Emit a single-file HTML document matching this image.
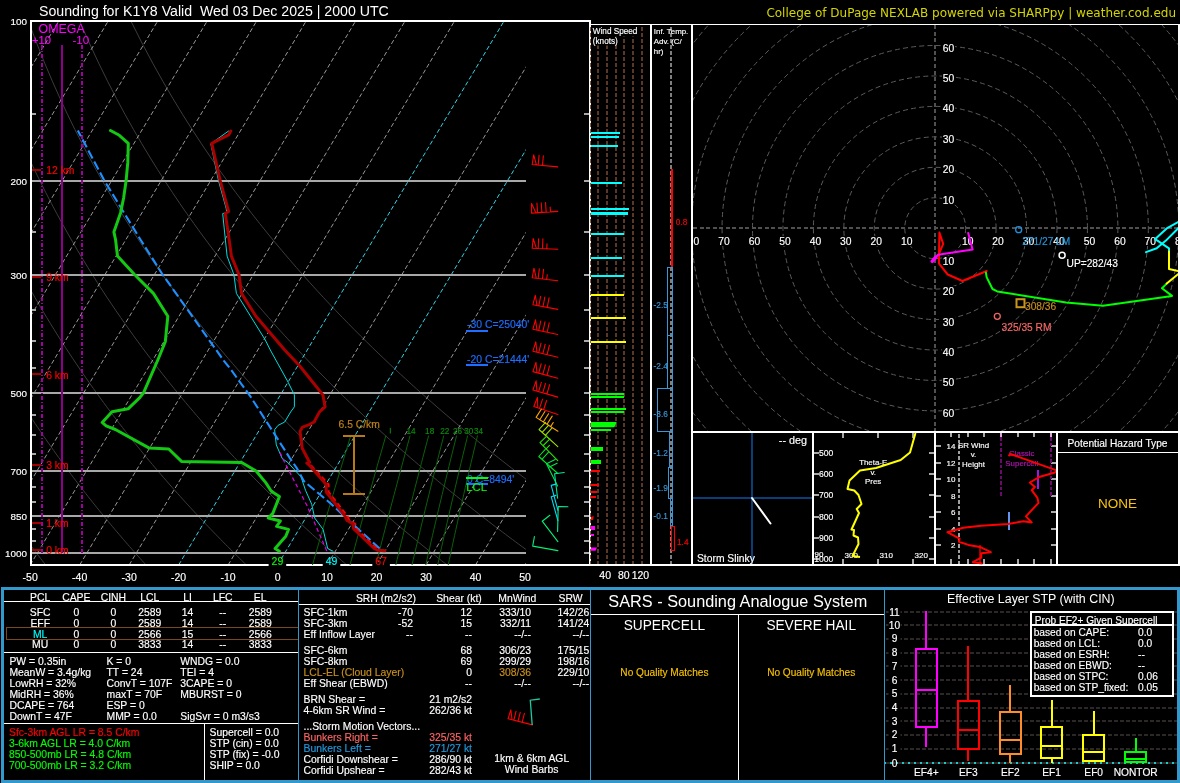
<!DOCTYPE html>
<html><head><meta charset="utf-8"><title>Sounding K1Y8</title>
<style>
html,body{margin:0;padding:0;background:#000;overflow:hidden}
svg{display:block;font-family:"Liberation Sans",sans-serif;will-change:transform}
</style></head><body>
<svg width="1180" height="783" viewBox="0 0 1180 783">
<rect x="0" y="0" width="1180" height="783" fill="#000"/>
<clipPath id="skc"><rect x="31" y="21" width="495" height="544"/></clipPath>
<g clip-path="url(#skc)">
<polyline points="45.7,565 43.97,562.79 42.23,560.55 40.48,558.29 38.72,556.01 36.95,553.71 35.18,551.39 33.39,549.04 31.6,546.67 29.8,544.27 27.99,541.85 26.17,539.4 24.34,536.92 22.5,534.42 20.65,531.89 18.79,529.34 16.92,526.75 15.04,524.14 13.16,521.49 11.26,518.82 9.35,516.11 7.43,513.37 5.5,510.6 3.56,507.8 1.6,504.96 -0.36,502.09 -2.34,499.18 -4.32,496.23 -6.32,493.24 -8.33,490.22 -10.36,487.16 -12.39,484.05 -14.44,480.9 -16.5,477.71 -18.57,474.48 -20.66,471.19 -22.76,467.87 -24.87,464.49 -27,461.06 -29.14,457.58 -31.29,454.05 -33.46,450.46 -35.65,446.82 -37.85,443.12 -40.06,439.35 -42.29,435.53 -44.54,431.64 -46.8,427.69 -49.07,423.66 -51.37,419.57 -53.68,415.4 -56,411.16 -58.35,406.83 -60.71,402.42 -63.09,397.93 -65.49,393.35 -67.91,388.68 -70.34,383.91 -72.8,379.03 -75.27,374.06 -77.77,368.97 -80.28,363.78 -82.82,358.46 -85.38,353.01 -87.95,347.44 -90.55,341.72 -93.17,335.87 -95.82,329.86 -98.48,323.69 -101.17,317.35 -103.88,310.83 -106.62,304.13 -109.38,297.22 -112.16,290.1 -114.96,282.75 -117.79,275.17 -120.65,267.33 -123.52,259.21 -126.42,250.79 -129.35,242.06 -132.29,232.99 -135.26,223.54 -138.24,213.7 -141.25,203.41 -144.27,192.65 -147.3,181.36 -150.35,169.5 -153.39,156.99 -156.44,143.76 -159.48,129.74 -162.5,114.81 -165.48,98.84 -168.42,81.7 -171.27,63.18 -174.03,43.05 -176.62,21" fill="none" stroke="#3c3c3c" stroke-width="1" />
<polyline points="146.05,565 144.04,562.79 142.03,560.55 140,558.29 137.96,556.01 135.91,553.71 133.85,551.39 131.78,549.04 129.7,546.67 127.61,544.27 125.51,541.85 123.39,539.4 121.27,536.92 119.13,534.42 116.98,531.89 114.82,529.34 112.64,526.75 110.46,524.14 108.26,521.49 106.04,518.82 103.82,516.11 101.58,513.37 99.33,510.6 97.06,507.8 94.78,504.96 92.49,502.09 90.18,499.18 87.85,496.23 85.52,493.24 83.16,490.22 80.79,487.16 78.41,484.05 76.01,480.9 73.59,477.71 71.16,474.48 68.71,471.19 66.25,467.87 63.76,464.49 61.26,461.06 58.74,457.58 56.2,454.05 53.65,450.46 51.07,446.82 48.48,443.12 45.87,439.35 43.23,435.53 40.58,431.64 37.9,427.69 35.2,423.66 32.49,419.57 29.74,415.4 26.98,411.16 24.19,406.83 21.38,402.42 18.55,397.93 15.69,393.35 12.81,388.68 9.9,383.91 6.96,379.03 4,374.06 1,368.97 -2.01,363.78 -5.06,358.46 -8.14,353.01 -11.25,347.44 -14.39,341.72 -17.56,335.87 -20.76,329.86 -23.99,323.69 -27.26,317.35 -30.57,310.83 -33.91,304.13 -37.28,297.22 -40.7,290.1 -44.15,282.75 -47.64,275.17 -51.17,267.33 -54.74,259.21 -58.35,250.79 -62,242.06 -65.7,232.99 -69.44,223.54 -73.22,213.7 -77.04,203.41 -80.91,192.65 -84.82,181.36 -88.77,169.5 -92.76,156.99 -96.79,143.76 -100.86,129.74 -104.95,114.81 -109.05,98.84 -113.17,81.7 -117.28,63.18 -121.35,43.05 -125.37,21" fill="none" stroke="#3c3c3c" stroke-width="1" />
<polyline points="246.4,565 244.12,562.79 241.82,560.55 239.52,558.29 237.2,556.01 234.87,553.71 232.53,551.39 230.17,549.04 227.81,546.67 225.42,544.27 223.03,541.85 220.62,539.4 218.2,536.92 215.76,534.42 213.31,531.89 210.84,529.34 208.36,526.75 205.87,524.14 203.36,521.49 200.83,518.82 198.29,516.11 195.73,513.37 193.16,510.6 190.57,507.8 187.96,504.96 185.33,502.09 182.69,499.18 180.03,496.23 177.36,493.24 174.66,490.22 171.95,487.16 169.21,484.05 166.46,480.9 163.69,477.71 160.9,474.48 158.08,471.19 155.25,467.87 152.4,464.49 149.52,461.06 146.62,457.58 143.7,454.05 140.76,450.46 137.8,446.82 134.81,443.12 131.79,439.35 128.75,435.53 125.69,431.64 122.6,427.69 119.48,423.66 116.34,419.57 113.17,415.4 109.97,411.16 106.74,406.83 103.48,402.42 100.19,397.93 96.87,393.35 93.52,388.68 90.13,383.91 86.72,379.03 83.26,374.06 79.78,368.97 76.25,363.78 72.69,358.46 69.1,353.01 65.46,347.44 61.78,341.72 58.06,335.87 54.3,329.86 50.49,323.69 46.64,317.35 42.75,310.83 38.8,304.13 34.81,297.22 30.77,290.1 26.67,282.75 22.52,275.17 18.31,267.33 14.05,259.21 9.73,250.79 5.34,242.06 0.9,232.99 -3.61,223.54 -8.19,213.7 -12.84,203.41 -17.55,192.65 -22.34,181.36 -27.2,169.5 -32.14,156.99 -37.15,143.76 -42.23,129.74 -47.39,114.81 -52.63,98.84 -57.92,81.7 -63.28,63.18 -68.68,43.05 -74.11,21" fill="none" stroke="#3c3c3c" stroke-width="1" />
<polyline points="346.75,565 344.19,562.79 341.62,560.55 339.04,558.29 336.44,556.01 333.83,553.71 331.21,551.39 328.57,549.04 325.91,546.67 323.24,544.27 320.55,541.85 317.85,539.4 315.13,536.92 312.39,534.42 309.64,531.89 306.87,529.34 304.08,526.75 301.28,524.14 298.46,521.49 295.62,518.82 292.76,516.11 289.88,513.37 286.99,510.6 284.07,507.8 281.14,504.96 278.18,502.09 275.21,499.18 272.21,496.23 269.19,493.24 266.16,490.22 263.1,487.16 260.01,484.05 256.91,480.9 253.78,477.71 250.63,474.48 247.46,471.19 244.26,467.87 241.03,464.49 237.78,461.06 234.51,457.58 231.2,454.05 227.87,450.46 224.52,446.82 221.13,443.12 217.72,439.35 214.27,435.53 210.8,431.64 207.29,427.69 203.76,423.66 200.19,419.57 196.59,415.4 192.95,411.16 189.28,406.83 185.57,402.42 181.83,397.93 178.05,393.35 174.23,388.68 170.37,383.91 166.47,379.03 162.53,374.06 158.55,368.97 154.52,363.78 150.45,358.46 146.33,353.01 142.16,347.44 137.95,341.72 133.68,335.87 129.36,329.86 124.98,323.69 120.55,317.35 116.06,310.83 111.51,304.13 106.9,297.22 102.23,290.1 97.49,282.75 92.67,275.17 87.79,267.33 82.84,259.21 77.8,250.79 72.69,242.06 67.49,232.99 62.21,223.54 56.84,213.7 51.37,203.41 45.81,192.65 40.14,181.36 34.37,169.5 28.49,156.99 22.5,143.76 16.39,129.74 10.16,114.81 3.8,98.84 -2.68,81.7 -9.28,63.18 -16.01,43.05 -22.85,21" fill="none" stroke="#3c3c3c" stroke-width="1" />
<polyline points="447.1,565 444.27,562.79 441.42,560.55 438.56,558.29 435.69,556.01 432.79,553.71 429.88,551.39 426.96,549.04 424.01,546.67 421.05,544.27 418.07,541.85 415.07,539.4 412.06,536.92 409.02,534.42 405.97,531.89 402.89,529.34 399.8,526.75 396.69,524.14 393.56,521.49 390.4,518.82 387.23,516.11 384.03,513.37 380.81,510.6 377.58,507.8 374.31,504.96 371.03,502.09 367.72,499.18 364.39,496.23 361.03,493.24 357.65,490.22 354.25,487.16 350.82,484.05 347.36,480.9 343.88,477.71 340.37,474.48 336.83,471.19 333.26,467.87 329.67,464.49 326.04,461.06 322.39,457.58 318.7,454.05 314.99,450.46 311.24,446.82 307.46,443.12 303.64,439.35 299.79,435.53 295.91,431.64 291.99,427.69 288.04,423.66 284.04,419.57 280.01,415.4 275.94,411.16 271.82,406.83 267.67,402.42 263.47,397.93 259.23,393.35 254.95,388.68 250.61,383.91 246.23,379.03 241.8,374.06 237.32,368.97 232.79,363.78 228.21,358.46 223.57,353.01 218.87,347.44 214.11,341.72 209.3,335.87 204.42,329.86 199.47,323.69 194.46,317.35 189.38,310.83 184.22,304.13 179,297.22 173.69,290.1 168.3,282.75 162.83,275.17 157.27,267.33 151.62,259.21 145.88,250.79 140.04,242.06 134.09,232.99 128.03,223.54 121.87,213.7 115.58,203.41 109.17,192.65 102.62,181.36 95.95,169.5 89.12,156.99 82.15,143.76 75.01,129.74 67.71,114.81 60.23,98.84 52.57,81.7 44.71,63.18 36.66,43.05 28.4,21" fill="none" stroke="#3c3c3c" stroke-width="1" />
<polyline points="547.45,565 544.34,562.79 541.22,560.55 538.08,558.29 534.93,556.01 531.75,553.71 528.56,551.39 525.35,549.04 522.11,546.67 518.86,544.27 515.59,541.85 512.3,539.4 508.98,536.92 505.65,534.42 502.3,531.89 498.92,529.34 495.52,526.75 492.1,524.14 488.66,521.49 485.19,518.82 481.7,516.11 478.18,513.37 474.64,510.6 471.08,507.8 467.49,504.96 463.88,502.09 460.24,499.18 456.57,496.23 452.87,493.24 449.15,490.22 445.4,487.16 441.62,484.05 437.81,480.9 433.97,477.71 430.1,474.48 426.2,471.19 422.27,467.87 418.3,464.49 414.3,461.06 410.27,457.58 406.2,454.05 402.1,450.46 397.96,446.82 393.78,443.12 389.57,439.35 385.32,435.53 381.02,431.64 376.69,427.69 372.31,423.66 367.89,419.57 363.43,415.4 358.92,411.16 354.37,406.83 349.76,402.42 345.11,397.93 340.41,393.35 335.66,388.68 330.85,383.91 325.99,379.03 321.07,374.06 316.1,368.97 311.06,363.78 305.96,358.46 300.8,353.01 295.57,347.44 290.28,341.72 284.91,335.87 279.47,329.86 273.96,323.69 268.37,317.35 262.69,310.83 256.93,304.13 251.09,297.22 245.15,290.1 239.12,282.75 232.99,275.17 226.75,267.33 220.41,259.21 213.95,250.79 207.38,242.06 200.68,232.99 193.86,223.54 186.89,213.7 179.78,203.41 172.53,192.65 165.11,181.36 157.52,169.5 149.75,156.99 141.79,143.76 133.63,129.74 125.26,114.81 116.66,98.84 107.81,81.7 98.71,63.18 89.33,43.05 79.66,21" fill="none" stroke="#3c3c3c" stroke-width="1" />
<polyline points="647.79,565 644.42,562.79 641.02,560.55 637.61,558.29 634.17,556.01 630.71,553.71 627.24,551.39 623.74,549.04 620.22,546.67 616.67,544.27 613.11,541.85 609.52,539.4 605.91,536.92 602.28,534.42 598.62,531.89 594.94,529.34 591.24,526.75 587.51,524.14 583.75,521.49 579.97,518.82 576.17,516.11 572.33,513.37 568.47,510.6 564.59,507.8 560.67,504.96 556.72,502.09 552.75,499.18 548.75,496.23 544.71,493.24 540.65,490.22 536.55,487.16 532.42,484.05 528.26,480.9 524.07,477.71 519.84,474.48 515.57,471.19 511.27,467.87 506.94,464.49 502.56,461.06 498.15,457.58 493.7,454.05 489.21,450.46 484.68,446.82 480.11,443.12 475.5,439.35 470.84,435.53 466.13,431.64 461.39,427.69 456.59,423.66 451.75,419.57 446.85,415.4 441.91,411.16 436.91,406.83 431.86,402.42 426.75,397.93 421.59,393.35 416.37,388.68 411.09,383.91 405.75,379.03 400.34,374.06 394.87,368.97 389.33,363.78 383.72,358.46 378.04,353.01 372.28,347.44 366.45,341.72 360.53,335.87 354.53,329.86 348.45,323.69 342.27,317.35 336.01,310.83 329.64,304.13 323.18,297.22 316.61,290.1 309.93,282.75 303.14,275.17 296.23,267.33 289.2,259.21 282.03,250.79 274.73,242.06 267.28,232.99 259.68,223.54 251.92,213.7 243.99,203.41 235.88,192.65 227.59,181.36 219.09,169.5 210.38,156.99 201.44,143.76 192.26,129.74 182.81,114.81 173.09,98.84 163.06,81.7 152.71,63.18 142,43.05 130.92,21" fill="none" stroke="#3c3c3c" stroke-width="1" />
<line x1="-514.08" y1="565" x2="-188.64" y2="21" stroke="#989898" stroke-width="1" stroke-dasharray="4.4 2.5" />
<line x1="-464.6" y1="565" x2="-139.16" y2="21" stroke="#989898" stroke-width="1" stroke-dasharray="4.4 2.5" />
<line x1="-415.12" y1="565" x2="-89.68" y2="21" stroke="#989898" stroke-width="1" stroke-dasharray="4.4 2.5" />
<line x1="-365.64" y1="565" x2="-40.2" y2="21" stroke="#989898" stroke-width="1" stroke-dasharray="4.4 2.5" />
<line x1="-316.16" y1="565" x2="9.28" y2="21" stroke="#989898" stroke-width="1" stroke-dasharray="4.4 2.5" />
<line x1="-266.68" y1="565" x2="58.76" y2="21" stroke="#989898" stroke-width="1" stroke-dasharray="4.4 2.5" />
<line x1="-217.2" y1="565" x2="108.24" y2="21" stroke="#989898" stroke-width="1" stroke-dasharray="4.4 2.5" />
<line x1="-167.72" y1="565" x2="157.72" y2="21" stroke="#989898" stroke-width="1" stroke-dasharray="4.4 2.5" />
<line x1="-118.24" y1="565" x2="207.2" y2="21" stroke="#989898" stroke-width="1" stroke-dasharray="4.4 2.5" />
<line x1="-68.76" y1="565" x2="256.68" y2="21" stroke="#989898" stroke-width="1" stroke-dasharray="4.4 2.5" />
<line x1="-19.28" y1="565" x2="306.16" y2="21" stroke="#989898" stroke-width="1" stroke-dasharray="4.4 2.5" />
<line x1="30.2" y1="565" x2="355.64" y2="21" stroke="#989898" stroke-width="1" stroke-dasharray="4.4 2.5" />
<line x1="79.68" y1="565" x2="405.12" y2="21" stroke="#989898" stroke-width="1" stroke-dasharray="4.4 2.5" />
<line x1="129.16" y1="565" x2="454.6" y2="21" stroke="#989898" stroke-width="1" stroke-dasharray="4.4 2.5" />
<line x1="178.64" y1="565" x2="504.08" y2="21" stroke="#35d2e2" stroke-width="1" stroke-dasharray="4.4 2.5" />
<line x1="228.12" y1="565" x2="553.56" y2="21" stroke="#989898" stroke-width="1" stroke-dasharray="4.4 2.5" />
<line x1="277.6" y1="565" x2="603.04" y2="21" stroke="#35d2e2" stroke-width="1" stroke-dasharray="4.4 2.5" />
<line x1="327.08" y1="565" x2="652.52" y2="21" stroke="#989898" stroke-width="1" stroke-dasharray="4.4 2.5" />
<line x1="376.56" y1="565" x2="702" y2="21" stroke="#989898" stroke-width="1" stroke-dasharray="4.4 2.5" />
<line x1="426.04" y1="565" x2="751.48" y2="21" stroke="#989898" stroke-width="1" stroke-dasharray="4.4 2.5" />
<line x1="475.52" y1="565" x2="800.96" y2="21" stroke="#989898" stroke-width="1" stroke-dasharray="4.4 2.5" />
<line x1="525" y1="565" x2="850.44" y2="21" stroke="#989898" stroke-width="1" stroke-dasharray="4.4 2.5" />
<line x1="31" y1="181" x2="526" y2="181" stroke="#a8a8a8" stroke-width="2" shape-rendering="crispEdges"/>
<line x1="31" y1="275" x2="526" y2="275" stroke="#a8a8a8" stroke-width="2" shape-rendering="crispEdges"/>
<line x1="31" y1="393" x2="526" y2="393" stroke="#a8a8a8" stroke-width="2" shape-rendering="crispEdges"/>
<line x1="31" y1="471" x2="526" y2="471" stroke="#a8a8a8" stroke-width="2" shape-rendering="crispEdges"/>
<line x1="31" y1="516" x2="526" y2="516" stroke="#a8a8a8" stroke-width="2" shape-rendering="crispEdges"/>
<line x1="31" y1="553" x2="526" y2="553" stroke="#a8a8a8" stroke-width="2" shape-rendering="crispEdges"/>
</g>
<line x1="31" y1="114" x2="36" y2="114" stroke="#a8a8a8" stroke-width="2" shape-rendering="crispEdges"/>
<line x1="31" y1="232" x2="36" y2="232" stroke="#a8a8a8" stroke-width="2" shape-rendering="crispEdges"/>
<line x1="31" y1="310" x2="36" y2="310" stroke="#a8a8a8" stroke-width="2" shape-rendering="crispEdges"/>
<line x1="31" y1="341" x2="36" y2="341" stroke="#a8a8a8" stroke-width="2" shape-rendering="crispEdges"/>
<line x1="31" y1="368" x2="36" y2="368" stroke="#a8a8a8" stroke-width="2" shape-rendering="crispEdges"/>
<line x1="31" y1="415" x2="36" y2="415" stroke="#a8a8a8" stroke-width="2" shape-rendering="crispEdges"/>
<line x1="31" y1="435" x2="36" y2="435" stroke="#a8a8a8" stroke-width="2" shape-rendering="crispEdges"/>
<line x1="31" y1="454" x2="36" y2="454" stroke="#a8a8a8" stroke-width="2" shape-rendering="crispEdges"/>
<line x1="31" y1="487" x2="36" y2="487" stroke="#a8a8a8" stroke-width="2" shape-rendering="crispEdges"/>
<line x1="31" y1="502" x2="36" y2="502" stroke="#a8a8a8" stroke-width="2" shape-rendering="crispEdges"/>
<line x1="31" y1="529" x2="36" y2="529" stroke="#a8a8a8" stroke-width="2" shape-rendering="crispEdges"/>
<line x1="31" y1="541" x2="36" y2="541" stroke="#a8a8a8" stroke-width="2" shape-rendering="crispEdges"/>
<line x1="584" y1="114" x2="590" y2="114" stroke="#a8a8a8" stroke-width="2" shape-rendering="crispEdges"/>
<line x1="584" y1="181" x2="590" y2="181" stroke="#a8a8a8" stroke-width="2" shape-rendering="crispEdges"/>
<line x1="584" y1="232" x2="590" y2="232" stroke="#a8a8a8" stroke-width="2" shape-rendering="crispEdges"/>
<line x1="584" y1="275" x2="590" y2="275" stroke="#a8a8a8" stroke-width="2" shape-rendering="crispEdges"/>
<line x1="584" y1="310" x2="590" y2="310" stroke="#a8a8a8" stroke-width="2" shape-rendering="crispEdges"/>
<line x1="584" y1="341" x2="590" y2="341" stroke="#a8a8a8" stroke-width="2" shape-rendering="crispEdges"/>
<line x1="584" y1="368" x2="590" y2="368" stroke="#a8a8a8" stroke-width="2" shape-rendering="crispEdges"/>
<line x1="584" y1="393" x2="590" y2="393" stroke="#a8a8a8" stroke-width="2" shape-rendering="crispEdges"/>
<line x1="584" y1="415" x2="590" y2="415" stroke="#a8a8a8" stroke-width="2" shape-rendering="crispEdges"/>
<line x1="584" y1="435" x2="590" y2="435" stroke="#a8a8a8" stroke-width="2" shape-rendering="crispEdges"/>
<line x1="584" y1="454" x2="590" y2="454" stroke="#a8a8a8" stroke-width="2" shape-rendering="crispEdges"/>
<line x1="584" y1="471" x2="590" y2="471" stroke="#a8a8a8" stroke-width="2" shape-rendering="crispEdges"/>
<line x1="584" y1="487" x2="590" y2="487" stroke="#a8a8a8" stroke-width="2" shape-rendering="crispEdges"/>
<line x1="584" y1="502" x2="590" y2="502" stroke="#a8a8a8" stroke-width="2" shape-rendering="crispEdges"/>
<line x1="584" y1="516" x2="590" y2="516" stroke="#a8a8a8" stroke-width="2" shape-rendering="crispEdges"/>
<line x1="584" y1="529" x2="590" y2="529" stroke="#a8a8a8" stroke-width="2" shape-rendering="crispEdges"/>
<line x1="584" y1="541" x2="590" y2="541" stroke="#a8a8a8" stroke-width="2" shape-rendering="crispEdges"/>
<line x1="584" y1="553" x2="590" y2="553" stroke="#a8a8a8" stroke-width="2" shape-rendering="crispEdges"/>
<rect x="31" y="21" width="559" height="544" fill="none" stroke="#fff" stroke-width="2" shape-rendering="crispEdges"/>
<text x="27" y="24.7" font-size="9.9" fill="#fff" stroke="#fff" stroke-width="0.15" text-anchor="end" >100</text>
<text x="27" y="185.06" font-size="9.9" fill="#fff" stroke="#fff" stroke-width="0.15" text-anchor="end" >200</text>
<text x="27" y="278.87" font-size="9.9" fill="#fff" stroke="#fff" stroke-width="0.15" text-anchor="end" >300</text>
<text x="27" y="397.05" font-size="9.9" fill="#fff" stroke="#fff" stroke-width="0.15" text-anchor="end" >500</text>
<text x="27" y="474.89" font-size="9.9" fill="#fff" stroke="#fff" stroke-width="0.15" text-anchor="end" >700</text>
<text x="27" y="519.81" font-size="9.9" fill="#fff" stroke="#fff" stroke-width="0.15" text-anchor="end" >850</text>
<text x="27" y="557.41" font-size="9.9" fill="#fff" stroke="#fff" stroke-width="0.15" text-anchor="end" >1000</text>
<text x="30.2" y="581" font-size="10.5" fill="#fff" stroke="#fff" stroke-width="0.15" text-anchor="middle" >-50</text>
<text x="79.68" y="581" font-size="10.5" fill="#fff" stroke="#fff" stroke-width="0.15" text-anchor="middle" >-40</text>
<text x="129.16" y="581" font-size="10.5" fill="#fff" stroke="#fff" stroke-width="0.15" text-anchor="middle" >-30</text>
<text x="178.64" y="581" font-size="10.5" fill="#fff" stroke="#fff" stroke-width="0.15" text-anchor="middle" >-20</text>
<text x="228.12" y="581" font-size="10.5" fill="#fff" stroke="#fff" stroke-width="0.15" text-anchor="middle" >-10</text>
<text x="277.6" y="581" font-size="10.5" fill="#fff" stroke="#fff" stroke-width="0.15" text-anchor="middle" >0</text>
<text x="327.08" y="581" font-size="10.5" fill="#fff" stroke="#fff" stroke-width="0.15" text-anchor="middle" >10</text>
<text x="376.56" y="581" font-size="10.5" fill="#fff" stroke="#fff" stroke-width="0.15" text-anchor="middle" >20</text>
<text x="426.04" y="581" font-size="10.5" fill="#fff" stroke="#fff" stroke-width="0.15" text-anchor="middle" >30</text>
<text x="475.52" y="581" font-size="10.5" fill="#fff" stroke="#fff" stroke-width="0.15" text-anchor="middle" >40</text>
<text x="525" y="581" font-size="10.5" fill="#fff" stroke="#fff" stroke-width="0.15" text-anchor="middle" >50</text>
<text x="39" y="15.6" font-size="14.15" fill="#fff" xml:space="preserve">Sounding for K1Y8 Valid  Wed 03 Dec 2025 | 2000 UTC</text>
<text x="1176" y="17" font-size="12" fill="#d4d400" text-anchor="end" font-family="'DejaVu Sans',sans-serif" >College of DuPage NEXLAB powered via SHARPpy | weather.cod.edu</text>
<g clip-path="url(#skc)">
<polyline points="350.78,435.53 347.9,444.97 345.14,454.05 342.5,462.78 339.97,471.19 337.53,479.31 335.19,487.16 332.93,494.74 330.76,502.09 328.66,509.21 326.62,516.11 324.66,522.82 322.75,529.34 320.91,535.68 319.12,541.85 317.38,547.85 315.69,553.71 314.05,559.42 312.45,565" fill="none" stroke="#0a600a" stroke-width="1" />
<polyline points="385.93,435.53 383.22,444.97 380.63,454.05 378.14,462.78 375.76,471.19 373.48,479.31 371.28,487.16 369.16,494.74 367.12,502.09 365.15,509.21 363.25,516.11 361.41,522.82 359.63,529.34 357.91,535.68 356.23,541.85 354.61,547.85 353.04,553.71 351.51,559.42 350.02,565" fill="none" stroke="#0a600a" stroke-width="1" />
<polyline points="410.1,435.53 407.51,444.97 405.03,454.05 402.65,462.78 400.38,471.19 398.2,479.31 396.1,487.16 394.08,494.74 392.14,502.09 390.26,509.21 388.45,516.11 386.7,522.82 385.01,529.34 383.37,535.68 381.78,541.85 380.24,547.85 378.75,553.71 377.29,559.42 375.88,565" fill="none" stroke="#0a600a" stroke-width="1" />
<text x="411.1" y="433.8" font-size="8.2" fill="#0a8c0a" stroke="#0a8c0a" stroke-width="0.15" text-anchor="middle" >14</text>
<polyline points="428.67,435.53 426.17,444.97 423.78,454.05 421.49,462.78 419.3,471.19 417.2,479.31 415.18,487.16 413.24,494.74 411.37,502.09 409.57,509.21 407.83,516.11 406.15,522.82 404.53,529.34 402.95,535.68 401.43,541.85 399.95,547.85 398.52,553.71 397.13,559.42 395.78,565" fill="none" stroke="#0a600a" stroke-width="1" />
<text x="429.67" y="433.8" font-size="8.2" fill="#0a8c0a" stroke="#0a8c0a" stroke-width="0.15" text-anchor="middle" >18</text>
<polyline points="443.8,435.53 441.38,444.97 439.06,454.05 436.85,462.78 434.73,471.19 432.69,479.31 430.74,487.16 428.86,494.74 427.06,502.09 425.32,509.21 423.64,516.11 422.01,522.82 420.45,529.34 418.93,535.68 417.46,541.85 416.03,547.85 414.65,553.71 413.31,559.42 412.01,565" fill="none" stroke="#0a600a" stroke-width="1" />
<text x="444.8" y="433.8" font-size="8.2" fill="#0a8c0a" stroke="#0a8c0a" stroke-width="0.15" text-anchor="middle" >22</text>
<polyline points="456.6,435.53 454.24,444.97 451.99,454.05 449.83,462.78 447.77,471.19 445.8,479.31 443.9,487.16 442.08,494.74 440.33,502.09 438.64,509.21 437.01,516.11 435.43,522.82 433.91,529.34 432.44,535.68 431.02,541.85 429.64,547.85 428.3,553.71 427.01,559.42 425.75,565" fill="none" stroke="#0a600a" stroke-width="1" />
<text x="457.6" y="433.8" font-size="8.2" fill="#0a8c0a" stroke="#0a8c0a" stroke-width="0.15" text-anchor="middle" >26</text>
<polyline points="467.7,435.53 465.4,444.97 463.2,454.05 461.1,462.78 459.09,471.19 457.17,479.31 455.32,487.16 453.55,494.74 451.84,502.09 450.19,509.21 448.61,516.11 447.08,522.82 445.6,529.34 444.17,535.68 442.79,541.85 441.45,547.85 440.15,553.71 438.89,559.42 437.67,565" fill="none" stroke="#0a600a" stroke-width="1" />
<text x="468.7" y="433.8" font-size="8.2" fill="#0a8c0a" stroke="#0a8c0a" stroke-width="0.15" text-anchor="middle" >30</text>
<polyline points="477.51,435.53 475.25,444.97 473.11,454.05 471.05,462.78 469.09,471.19 467.21,479.31 465.41,487.16 463.68,494.74 462.01,502.09 460.41,509.21 458.86,516.11 457.37,522.82 455.93,529.34 454.54,535.68 453.19,541.85 451.88,547.85 450.62,553.71 449.39,559.42 448.21,565" fill="none" stroke="#0a600a" stroke-width="1" />
<text x="478.51" y="433.8" font-size="8.2" fill="#0a8c0a" stroke="#0a8c0a" stroke-width="0.15" text-anchor="middle" >34</text>
<line x1="390.3" y1="427.8" x2="390.3" y2="433.5" stroke="#0a8c0a" stroke-width="1" />
<line x1="62" y1="45" x2="62" y2="553" stroke="#8c008c" stroke-width="2" shape-rendering="crispEdges"/>
<line x1="42" y1="45" x2="42" y2="553" stroke="#a000a0" stroke-width="2" stroke-dasharray="4 2 1 2" shape-rendering="crispEdges"/>
<line x1="82" y1="45" x2="82" y2="553" stroke="#a000a0" stroke-width="2" stroke-dasharray="4 2 1 2" shape-rendering="crispEdges"/>
<text x="38.6" y="32.7" font-size="12.4" fill="#ff00ff" >OMEGA</text>
<text x="32" y="44" font-size="11.2" fill="#ff00ff" stroke="#ff00ff" stroke-width="0.15" >+10</text>
<text x="72.5" y="44" font-size="11.6" fill="#ff00ff" >-10</text>
<line x1="32" y1="170" x2="41" y2="170" stroke="#a00000" stroke-width="2" shape-rendering="crispEdges"/>
<text x="46.2" y="173.8" font-size="10.4" fill="#ff0000" stroke="#ff0000" stroke-width="0.15" >12 km</text>
<line x1="32" y1="277" x2="41" y2="277" stroke="#a00000" stroke-width="2" shape-rendering="crispEdges"/>
<text x="46.2" y="280.7" font-size="10.4" fill="#ff0000" stroke="#ff0000" stroke-width="0.15" >9 km</text>
<line x1="32" y1="374" x2="41" y2="374" stroke="#a00000" stroke-width="2" shape-rendering="crispEdges"/>
<text x="46.2" y="378.6" font-size="10.4" fill="#ff0000" stroke="#ff0000" stroke-width="0.15" >6 km</text>
<line x1="32" y1="465" x2="41" y2="465" stroke="#a00000" stroke-width="2" shape-rendering="crispEdges"/>
<text x="46.2" y="469" font-size="10.4" fill="#ff0000" stroke="#ff0000" stroke-width="0.15" >3 km</text>
<line x1="32" y1="523" x2="41" y2="523" stroke="#a00000" stroke-width="2" shape-rendering="crispEdges"/>
<text x="46.2" y="526.9" font-size="10.4" fill="#ff0000" stroke="#ff0000" stroke-width="0.15" >1 km</text>
<line x1="32" y1="550" x2="41" y2="550" stroke="#a00000" stroke-width="2" shape-rendering="crispEdges"/>
<text x="46.2" y="553.7" font-size="10.4" fill="#ff0000" stroke="#ff0000" stroke-width="0.15" >0 km</text>
<polyline points="228.6,131 210.8,143.7 218.5,180.7 226.1,208.1 226.9,212.4 222.7,213.6 225.4,240 227.1,256.1 233.9,274.7 236.4,293.4 265.3,340 270.3,350 288.1,382.2 294.4,394.9 294.4,406.8 290.7,411.9 284.7,422 278,425.4 274.6,429.7 276.3,444.9 282.2,458.5 288.1,462.7 295.8,471.2 301,476.8 305.6,490.5 311.7,504.2 314.7,518 323.1,529.4 327.7,548.5 333,551.2" fill="none" stroke="#00dcdc" stroke-width="1" stroke-linejoin="round" stroke-linecap="round"/>
<polyline points="280,452.5 284.2,461.5 307.1,505.8 326.9,551.2" fill="none" stroke="#e000e0" stroke-width="1.2" stroke-dasharray="4 3" />
<polyline points="379.6,548.5 346.8,518.7 331.5,504.2 304.1,481.4 296.6,467.8 290,458.3 250,395.8 229.7,368 223.9,360.8 162.7,274.7 140.7,240 104.4,180.7 77.8,130.5" fill="none" stroke="#1e90ff" stroke-width="2.1" stroke-dasharray="9 3.5" />
<polyline points="110.5,130.5 119.3,135.3 128.3,143.4 127.8,162.4 126.1,180.7 123.6,198 120.7,212.4 113.9,231.9 115.6,240 117.5,256.1 134.7,274.7 153.4,293.4 167.8,316.3 165.3,341.7 157.8,360 143.4,393.1 140,397.3 128.1,408.8 112,411.7 102.2,422.4 106.1,425.8 115.4,429.5 149.3,448.1 168.8,449 181.5,461.4 241.7,462.5 256.1,471 265.9,482.9 271.3,491.3 279.4,496.6 272.8,513.4 268.2,518 280.4,521 276.6,526.4 288.5,529.4 285.8,536.3 275.1,548.5 279.4,551.2" fill="none" stroke="#14c814" stroke-width="3" stroke-linejoin="round" stroke-linecap="round"/>
<polyline points="310.8,465.3 328.5,484.4 328.5,492 347.5,516.4 349.1,520.2 355.2,524.1 355.9,528.6 376.5,548.5 380.3,550.3 385.8,550.8" fill="none" stroke="#ff0000" stroke-width="2.2" stroke-dasharray="5 3" />
<polyline points="230.8,131 228.6,134.9 211.7,143.4 220.2,180.7 228.6,211.5 225.3,213.6 229.2,240 231.4,256.1 239,274.7 241.5,293.4 255.9,316.3 284.7,350 300,366.3 322.9,394.9 325.1,406.8 319.5,411.9 314.1,422 309.3,424.6 302.5,427.1 300,431.4 302.2,448.3 308.5,460.2 309.7,462.2 306.8,463.2 309.4,465.3 326.2,484.4 326.2,492 345.2,516.4 346.8,520.2 352.9,524.1 353.6,528.6 374.2,548.5 378,550.3 384.9,550.8" fill="none" stroke="#aa0000" stroke-width="3" stroke-linejoin="round" stroke-linecap="round"/>
</g>
<text x="338.6" y="427.6" font-size="10.3" fill="#c08418" stroke="#c08418" stroke-width="0.15" >6.5 C/km</text>
<line x1="343" y1="436" x2="365" y2="436" stroke="#b87a16" stroke-width="2" shape-rendering="crispEdges"/>
<line x1="343" y1="494" x2="365" y2="494" stroke="#b87a16" stroke-width="2" shape-rendering="crispEdges"/>
<line x1="354" y1="436" x2="354" y2="494" stroke="#b87a16" stroke-width="2" shape-rendering="crispEdges"/>
<text x="467" y="328.4" font-size="10.4" fill="#1e6eff" stroke="#1e6eff" stroke-width="0.15" >-30 C=25040'</text>
<line x1="466" y1="331" x2="488" y2="331" stroke="#1e6eff" stroke-width="2" shape-rendering="crispEdges"/>
<text x="467" y="363.2" font-size="10.4" fill="#1e6eff" stroke="#1e6eff" stroke-width="0.15" >-20 C=21444'</text>
<line x1="466" y1="365" x2="488" y2="365" stroke="#1e6eff" stroke-width="2" shape-rendering="crispEdges"/>
<text x="467" y="482.9" font-size="10.4" fill="#1e6eff" stroke="#1e6eff" stroke-width="0.15" >0 C=8494'</text>
<line x1="466" y1="484" x2="488" y2="484" stroke="#1e6eff" stroke-width="2" shape-rendering="crispEdges"/>
<line x1="466" y1="478" x2="488" y2="478" stroke="#00ff00" stroke-width="2" shape-rendering="crispEdges"/>
<text x="466.2" y="490.8" font-size="11.3" fill="#00ff00" stroke="#00ff00" stroke-width="0.15" >LCL</text>
<rect x="268.6" y="562" width="17.6" height="6" fill="#000" />
<text x="277.4" y="565" font-size="10.5" fill="#00ff00" stroke="#00ff00" stroke-width="0.15" text-anchor="middle" >29</text>
<rect x="322.7" y="562" width="17.6" height="6" fill="#000" />
<text x="331.5" y="565" font-size="10.5" fill="#00ffff" stroke="#00ffff" stroke-width="0.15" text-anchor="middle" >49</text>
<rect x="372.3" y="562" width="17.6" height="6" fill="#000" />
<text x="381.1" y="565" font-size="10.5" fill="#ff0000" stroke="#ff0000" stroke-width="0.15" text-anchor="middle" >67</text>
<path d="M557.8 166.9L532.2 164.5M532.2 164.5L533.7 154.9L536.38 164.89M538.17 165.06L539.08 155.4M542.46 165.46L543.36 155.8" fill="none" stroke="#ff0000" stroke-width="1.1" stroke-linejoin="round" stroke-linecap="round"/>
<path d="M557.8 211.4L531.6 213.1M531.6 213.1L531.57 203.38L535.79 212.83M537.59 212.71L536.96 203.03M541.88 212.43L541.25 202.75M546.17 212.15L545.54 202.48M550.46 211.88L550.15 207.04" fill="none" stroke="#ff0000" stroke-width="1.1" stroke-linejoin="round" stroke-linecap="round"/>
<path d="M557.8 249.2L532.2 248.2M532.2 248.2L533.18 238.53L536.4 248.36M538.2 248.43L538.57 238.74M542.49 248.6L542.87 238.91M546.79 248.77L546.98 243.92" fill="none" stroke="#ff0000" stroke-width="1.1" stroke-linejoin="round" stroke-linecap="round"/>
<path d="M557.8 280.8L532.2 277.8M532.2 277.8L533.92 268.24L536.37 278.29M538.16 278.5L539.29 268.86M542.43 279L543.56 269.36M546.7 279.5L547.27 274.68" fill="none" stroke="#ff0000" stroke-width="1.1" stroke-linejoin="round" stroke-linecap="round"/>
<path d="M557.8 309.4L532.9 304.7M532.9 304.7L535.29 295.28L537.03 305.48M538.8 305.81L540.6 296.28M543.02 306.61L544.82 297.08M547.25 307.41L549.05 297.88" fill="none" stroke="#ff0000" stroke-width="1.1" stroke-linejoin="round" stroke-linecap="round"/>
<path d="M557.8 334.5L532.9 329.2M532.9 329.2L535.51 319.84L537.01 330.07M538.77 330.45L540.79 320.96M542.97 331.34L544.99 321.86M547.18 332.24L549.2 322.75" fill="none" stroke="#ff0000" stroke-width="1.1" stroke-linejoin="round" stroke-linecap="round"/>
<path d="M557.8 357.3L532.9 351.2M532.9 351.2L535.79 341.92L536.98 352.2M538.73 352.63L541.04 343.21M542.9 353.65L545.21 344.23M547.08 354.67L549.39 345.25" fill="none" stroke="#ff0000" stroke-width="1.1" stroke-linejoin="round" stroke-linecap="round"/>
<path d="M557.8 378.2L532.9 371.6M532.9 371.6L535.97 362.38L536.96 372.68M538.7 373.14L541.18 363.76M542.86 374.24L545.34 364.86M547.01 375.34L549.5 365.96" fill="none" stroke="#ff0000" stroke-width="1.1" stroke-linejoin="round" stroke-linecap="round"/>
<path d="M557.8 397.1L532.9 390M532.9 390L536.14 380.84L536.94 391.15M538.67 391.65L541.33 382.32M542.81 392.82L545.47 383.5M546.94 394L549.6 384.68" fill="none" stroke="#ff0000" stroke-width="1.1" stroke-linejoin="round" stroke-linecap="round"/>
<path d="M557.9 414.5L533.8 406.5M533.8 406.5L537.43 397.48L537.79 407.82M539.49 408.39L542.55 399.18M543.58 409.74L546.63 400.54" fill="none" stroke="#ff0000" stroke-width="1.1" stroke-linejoin="round" stroke-linecap="round"/>
<path d="M557.9 431.2L536.1 417.4M536.1 417.4L541.29 409.2M539.73 419.7L544.92 411.5M543.37 422L548.55 413.8M547 424.3L552.19 416.1M550.63 426.6L553.23 422.5" fill="none" stroke="#ffa500" stroke-width="1.1" stroke-linejoin="round" stroke-linecap="round"/>
<path d="M557.8 446.6L539 429.5M539 429.5L545.53 422.32M542.18 432.39L548.71 425.22M545.36 435.29L551.89 428.11" fill="none" stroke="#a0e000" stroke-width="1.1" stroke-linejoin="round" stroke-linecap="round"/>
<path d="M557.8 460.7L540 442.7M540 442.7L546.9 435.88M543.02 445.76L549.92 438.94M546.05 448.81L549.5 445.4" fill="none" stroke="#28e600" stroke-width="1.1" stroke-linejoin="round" stroke-linecap="round"/>
<path d="M557.8 473.5L538.8 456.5M538.8 456.5L545.27 449.27M542 459.37L548.47 452.14" fill="none" stroke="#00e61e" stroke-width="1.1" stroke-linejoin="round" stroke-linecap="round"/>
<path d="M557.6 486.1L546.5 463.7M546.5 463.7L555.19 459.39M548.41 467.55L557.1 463.25" fill="none" stroke="#00e650" stroke-width="1.1" stroke-linejoin="round" stroke-linecap="round"/>
<path d="M557.6 498.2L554.6 473.7M554.6 473.7L564.23 472.52" fill="none" stroke="#00e6a0" stroke-width="1.1" stroke-linejoin="round" stroke-linecap="round"/>
<path d="M557.9 510.3L551.2 485.4M551.2 485.4L555.88 484.14" fill="none" stroke="#00dcf0" stroke-width="1.1" stroke-linejoin="round" stroke-linecap="round"/>
<path d="M557.9 520.6L551.2 496.7M551.2 496.7L555.87 495.39" fill="none" stroke="#00dcf0" stroke-width="1.1" stroke-linejoin="round" stroke-linecap="round"/>
<path d="M557.6 531.4L558.2 506.5M558.2 506.5L567.9 506.73" fill="none" stroke="#00f0a0" stroke-width="1.1" stroke-linejoin="round" stroke-linecap="round"/>
<path d="M557.9 541.6L542.2 521.2M542.2 521.2L549.89 515.28" fill="none" stroke="#00f078" stroke-width="1.1" stroke-linejoin="round" stroke-linecap="round"/>
<path d="M557.9 550.6L532.7 546.1M532.7 546.1L534.41 536.55" fill="none" stroke="#00f078" stroke-width="1.1" stroke-linejoin="round" stroke-linecap="round"/>
<line x1="590.5" y1="27" x2="590.5" y2="564" stroke="#8a5a3c" stroke-width="1" stroke-dasharray="4 2" shape-rendering="crispEdges"/>
<line x1="598" y1="27" x2="598" y2="564" stroke="#5a3825" stroke-width="2" stroke-dasharray="4 2" shape-rendering="crispEdges"/>
<line x1="607" y1="27" x2="607" y2="564" stroke="#5a3825" stroke-width="2" stroke-dasharray="4 2" shape-rendering="crispEdges"/>
<line x1="616" y1="27" x2="616" y2="564" stroke="#5a3825" stroke-width="2" stroke-dasharray="4 2" shape-rendering="crispEdges"/>
<line x1="624" y1="27" x2="624" y2="564" stroke="#5a3825" stroke-width="2" stroke-dasharray="4 2" shape-rendering="crispEdges"/>
<line x1="633" y1="27" x2="633" y2="564" stroke="#5a3825" stroke-width="2" stroke-dasharray="4 2" shape-rendering="crispEdges"/>
<line x1="642" y1="27" x2="642" y2="564" stroke="#5a3825" stroke-width="2" stroke-dasharray="4 2" shape-rendering="crispEdges"/>
<rect x="591.5" y="26" width="46" height="10.5" fill="#000" />
<rect x="591.5" y="36.5" width="28.5" height="9" fill="#000" />
<text x="592.8" y="33.7" font-size="8.2" fill="#fff" stroke="#fff" stroke-width="0.15" >Wind Speed</text>
<text x="592.8" y="44" font-size="8.2" fill="#fff" stroke="#fff" stroke-width="0.15" >(knots)</text>
<rect x="591" y="132" width="29" height="2" fill="#00ffff" shape-rendering="crispEdges"/>
<rect x="591" y="136" width="28" height="2" fill="#00ffff" shape-rendering="crispEdges"/>
<rect x="591" y="145" width="27" height="2" fill="#00ffff" shape-rendering="crispEdges"/>
<rect x="591" y="182" width="31" height="2" fill="#00ffff" shape-rendering="crispEdges"/>
<rect x="591" y="208" width="37.7" height="2" fill="#00ffff" shape-rendering="crispEdges"/>
<rect x="591" y="233" width="33" height="2" fill="#00ffff" shape-rendering="crispEdges"/>
<rect x="591" y="257" width="31" height="2" fill="#00ffff" shape-rendering="crispEdges"/>
<rect x="591" y="275" width="32.6" height="2" fill="#00ffff" shape-rendering="crispEdges"/>
<rect x="591" y="212.2" width="36.8" height="3" fill="#00ffff" shape-rendering="crispEdges"/>
<rect x="591" y="294" width="32.6" height="2" fill="#ffff00" shape-rendering="crispEdges"/>
<rect x="591" y="317" width="35" height="2" fill="#ffff00" shape-rendering="crispEdges"/>
<rect x="591" y="341" width="35" height="2" fill="#ffff00" shape-rendering="crispEdges"/>
<rect x="591" y="393" width="33" height="2" fill="#00ff00" shape-rendering="crispEdges"/>
<rect x="591" y="396" width="33" height="2" fill="#00ff00" shape-rendering="crispEdges"/>
<rect x="591" y="408" width="35" height="2" fill="#00ff00" shape-rendering="crispEdges"/>
<rect x="591" y="411" width="33" height="2" fill="#00ff00" shape-rendering="crispEdges"/>
<rect x="591" y="429" width="20" height="2" fill="#00ff00" shape-rendering="crispEdges"/>
<polygon points="591,422 616.7,422 614.4,427.2 591,427.2" fill="#00ff00"/>
<rect x="591" y="446.9" width="12" height="4.2" fill="#00ff00" shape-rendering="crispEdges"/>
<rect x="591" y="460" width="10" height="4" fill="#00ff00" shape-rendering="crispEdges"/>
<rect x="591" y="470" width="9" height="2" fill="#ff0000" shape-rendering="crispEdges"/>
<rect x="591" y="484" width="7.8" height="2" fill="#ff0000" shape-rendering="crispEdges"/>
<rect x="591" y="491" width="6" height="2" fill="#ff0000" shape-rendering="crispEdges"/>
<rect x="591" y="496" width="5" height="2" fill="#ff0000" shape-rendering="crispEdges"/>
<polygon points="591,517 593.7,516 593,520 591,520" fill="#ff0000"/>
<rect x="591" y="526" width="4" height="4" fill="#ff00ff" shape-rendering="crispEdges"/>
<rect x="591" y="534" width="2.7" height="2" fill="#ff00ff" shape-rendering="crispEdges"/>
<polygon points="591,547.5 597,547.5 595.5,550.8 591,550.8" fill="#ff00ff"/>
<text x="605.2" y="578.6" font-size="10.5" fill="#fff" stroke="#fff" stroke-width="0.15" text-anchor="middle" >40</text>
<text x="623.8" y="578.6" font-size="10.5" fill="#fff" stroke="#fff" stroke-width="0.15" text-anchor="middle" >80</text>
<text x="640.4" y="578.6" font-size="10.5" fill="#fff" stroke="#fff" stroke-width="0.15" text-anchor="middle" >120</text>
<line x1="671" y1="27" x2="671" y2="564" stroke="#808080" stroke-width="2" stroke-dasharray="4 2" shape-rendering="crispEdges"/>
<text x="653.8" y="33.7" font-size="7.9" fill="#fff" stroke="#fff" stroke-width="0.15" >Inf. Temp.</text>
<text x="653.8" y="44" font-size="7.9" fill="#fff" stroke="#fff" stroke-width="0.15" >Adv. (C/</text>
<text x="653.8" y="54" font-size="7.9" fill="#fff" stroke="#fff" stroke-width="0.15" >hr)</text>
<line x1="672" y1="169" x2="672" y2="267.4" stroke="#ff0000" stroke-width="2" shape-rendering="crispEdges"/>
<text x="675.8" y="225" font-size="8.3" fill="#ff0000" stroke="#ff0000" stroke-width="0.15" >0.8</text>
<text x="653.5" y="308.2" font-size="8.3" fill="#3a96d6" stroke="#3a96d6" stroke-width="0.15" >-2.5</text>
<text x="653.5" y="369.1" font-size="8.3" fill="#3a96d6" stroke="#3a96d6" stroke-width="0.15" >-2.4</text>
<text x="653.5" y="417.4" font-size="8.3" fill="#3a96d6" stroke="#3a96d6" stroke-width="0.15" >-3.6</text>
<text x="653.5" y="456" font-size="8.3" fill="#3a96d6" stroke="#3a96d6" stroke-width="0.15" >-1.2</text>
<text x="653.5" y="490.5" font-size="8.3" fill="#3a96d6" stroke="#3a96d6" stroke-width="0.15" >-1.9</text>
<text x="653.5" y="519.3" font-size="8.3" fill="#3a96d6" stroke="#3a96d6" stroke-width="0.15" >-0.1</text>
<rect x="667.5" y="267.5" width="5" height="68" fill="none" stroke="#3a96d6" stroke-width="1" shape-rendering="crispEdges"/>
<rect x="667.5" y="335.5" width="5" height="53" fill="none" stroke="#3a96d6" stroke-width="1" shape-rendering="crispEdges"/>
<rect x="657.5" y="388.5" width="15" height="43" fill="none" stroke="#3a96d6" stroke-width="1" shape-rendering="crispEdges"/>
<rect x="669.5" y="431.5" width="3" height="36" fill="none" stroke="#3a96d6" stroke-width="1" shape-rendering="crispEdges"/>
<rect x="668.5" y="467.5" width="4" height="31" fill="none" stroke="#3a96d6" stroke-width="1" shape-rendering="crispEdges"/>
<rect x="670.5" y="498.5" width="2" height="27.5" fill="none" stroke="#3a96d6" stroke-width="1" shape-rendering="crispEdges"/>
<rect x="671.5" y="526" width="3" height="24.5" fill="none" stroke="#ff0000" stroke-width="1" shape-rendering="crispEdges"/>
<text x="677" y="545.2" font-size="8.3" fill="#ff0000" stroke="#ff0000" stroke-width="0.15" >1.4</text>
<clipPath id="hoc"><rect x="693" y="25" width="485" height="406"/></clipPath>
<g clip-path="url(#hoc)">
<circle cx="935.2" cy="228.2" r="30.45" fill="none" stroke="#5c5c5c" stroke-width="1" stroke-dasharray="5 3.2" />
<circle cx="935.2" cy="228.2" r="60.9" fill="none" stroke="#5c5c5c" stroke-width="1" stroke-dasharray="5 3.2" />
<circle cx="935.2" cy="228.2" r="91.35" fill="none" stroke="#5c5c5c" stroke-width="1" stroke-dasharray="5 3.2" />
<circle cx="935.2" cy="228.2" r="121.8" fill="none" stroke="#5c5c5c" stroke-width="1" stroke-dasharray="5 3.2" />
<circle cx="935.2" cy="228.2" r="152.25" fill="none" stroke="#5c5c5c" stroke-width="1" stroke-dasharray="5 3.2" />
<circle cx="935.2" cy="228.2" r="182.7" fill="none" stroke="#5c5c5c" stroke-width="1" stroke-dasharray="5 3.2" />
<circle cx="935.2" cy="228.2" r="213.15" fill="none" stroke="#5c5c5c" stroke-width="1" stroke-dasharray="5 3.2" />
<circle cx="935.2" cy="228.2" r="243.6" fill="none" stroke="#5c5c5c" stroke-width="1" stroke-dasharray="5 3.2" />
<circle cx="935.2" cy="228.2" r="274.05" fill="none" stroke="#5c5c5c" stroke-width="1" stroke-dasharray="5 3.2" />
<circle cx="935.2" cy="228.2" r="304.5" fill="none" stroke="#5c5c5c" stroke-width="1" stroke-dasharray="5 3.2" />
<circle cx="935.2" cy="228.2" r="334.95" fill="none" stroke="#5c5c5c" stroke-width="1" stroke-dasharray="5 3.2" />
<circle cx="935.2" cy="228.2" r="365.4" fill="none" stroke="#5c5c5c" stroke-width="1" stroke-dasharray="5 3.2" />
<line x1="693" y1="228" x2="1178" y2="228" stroke="#505050" stroke-width="2" stroke-dasharray="4 2.5" shape-rendering="crispEdges"/>
<line x1="935" y1="25" x2="935" y2="431" stroke="#505050" stroke-width="2" stroke-dasharray="4 2.5" shape-rendering="crispEdges"/>
<rect x="900.25" y="236" width="13" height="10" fill="#000" />
<text x="906.75" y="245" font-size="10.3" fill="#fff" stroke="#fff" stroke-width="0.15" text-anchor="middle" >10</text>
<rect x="961.15" y="236" width="13" height="10" fill="#000" />
<text x="967.65" y="245" font-size="10.3" fill="#fff" stroke="#fff" stroke-width="0.15" text-anchor="middle" >10</text>
<rect x="869.8" y="236" width="13" height="10" fill="#000" />
<text x="876.3" y="245" font-size="10.3" fill="#fff" stroke="#fff" stroke-width="0.15" text-anchor="middle" >20</text>
<rect x="991.6" y="236" width="13" height="10" fill="#000" />
<text x="998.1" y="245" font-size="10.3" fill="#fff" stroke="#fff" stroke-width="0.15" text-anchor="middle" >20</text>
<rect x="839.35" y="236" width="13" height="10" fill="#000" />
<text x="845.85" y="245" font-size="10.3" fill="#fff" stroke="#fff" stroke-width="0.15" text-anchor="middle" >30</text>
<rect x="1022.05" y="236" width="13" height="10" fill="#000" />
<text x="1028.55" y="245" font-size="10.3" fill="#fff" stroke="#fff" stroke-width="0.15" text-anchor="middle" >30</text>
<rect x="808.9" y="236" width="13" height="10" fill="#000" />
<text x="815.4" y="245" font-size="10.3" fill="#fff" stroke="#fff" stroke-width="0.15" text-anchor="middle" >40</text>
<rect x="1052.5" y="236" width="13" height="10" fill="#000" />
<text x="1059" y="245" font-size="10.3" fill="#fff" stroke="#fff" stroke-width="0.15" text-anchor="middle" >40</text>
<rect x="778.45" y="236" width="13" height="10" fill="#000" />
<text x="784.95" y="245" font-size="10.3" fill="#fff" stroke="#fff" stroke-width="0.15" text-anchor="middle" >50</text>
<rect x="1082.95" y="236" width="13" height="10" fill="#000" />
<text x="1089.45" y="245" font-size="10.3" fill="#fff" stroke="#fff" stroke-width="0.15" text-anchor="middle" >50</text>
<rect x="748" y="236" width="13" height="10" fill="#000" />
<text x="754.5" y="245" font-size="10.3" fill="#fff" stroke="#fff" stroke-width="0.15" text-anchor="middle" >60</text>
<rect x="1113.4" y="236" width="13" height="10" fill="#000" />
<text x="1119.9" y="245" font-size="10.3" fill="#fff" stroke="#fff" stroke-width="0.15" text-anchor="middle" >60</text>
<rect x="717.55" y="236" width="13" height="10" fill="#000" />
<text x="724.05" y="245" font-size="10.3" fill="#fff" stroke="#fff" stroke-width="0.15" text-anchor="middle" >70</text>
<rect x="1143.85" y="236" width="13" height="10" fill="#000" />
<text x="1150.35" y="245" font-size="10.3" fill="#fff" stroke="#fff" stroke-width="0.15" text-anchor="middle" >70</text>
<rect x="687.1" y="236" width="13" height="10" fill="#000" />
<text x="693.6" y="245" font-size="10.3" fill="#fff" stroke="#fff" stroke-width="0.15" text-anchor="middle" >80</text>
<rect x="1174.3" y="236" width="13" height="10" fill="#000" />
<text x="1180.8" y="245" font-size="10.3" fill="#fff" stroke="#fff" stroke-width="0.15" text-anchor="middle" >80</text>
<rect x="942" y="194.75" width="13" height="10" fill="#000" />
<text x="942.8" y="203.75" font-size="10.3" fill="#fff" stroke="#fff" stroke-width="0.15" >10</text>
<rect x="942" y="255.65" width="13" height="10" fill="#000" />
<text x="942.8" y="264.65" font-size="10.3" fill="#fff" stroke="#fff" stroke-width="0.15" >10</text>
<rect x="942" y="164.3" width="13" height="10" fill="#000" />
<text x="942.8" y="173.3" font-size="10.3" fill="#fff" stroke="#fff" stroke-width="0.15" >20</text>
<rect x="942" y="286.1" width="13" height="10" fill="#000" />
<text x="942.8" y="295.1" font-size="10.3" fill="#fff" stroke="#fff" stroke-width="0.15" >20</text>
<rect x="942" y="133.85" width="13" height="10" fill="#000" />
<text x="942.8" y="142.85" font-size="10.3" fill="#fff" stroke="#fff" stroke-width="0.15" >30</text>
<rect x="942" y="316.55" width="13" height="10" fill="#000" />
<text x="942.8" y="325.55" font-size="10.3" fill="#fff" stroke="#fff" stroke-width="0.15" >30</text>
<rect x="942" y="103.4" width="13" height="10" fill="#000" />
<text x="942.8" y="112.4" font-size="10.3" fill="#fff" stroke="#fff" stroke-width="0.15" >40</text>
<rect x="942" y="347" width="13" height="10" fill="#000" />
<text x="942.8" y="356" font-size="10.3" fill="#fff" stroke="#fff" stroke-width="0.15" >40</text>
<rect x="942" y="72.95" width="13" height="10" fill="#000" />
<text x="942.8" y="81.95" font-size="10.3" fill="#fff" stroke="#fff" stroke-width="0.15" >50</text>
<rect x="942" y="377.45" width="13" height="10" fill="#000" />
<text x="942.8" y="386.45" font-size="10.3" fill="#fff" stroke="#fff" stroke-width="0.15" >50</text>
<rect x="942" y="42.5" width="13" height="10" fill="#000" />
<text x="942.8" y="51.5" font-size="10.3" fill="#fff" stroke="#fff" stroke-width="0.15" >60</text>
<rect x="942" y="407.9" width="13" height="10" fill="#000" />
<text x="942.8" y="416.9" font-size="10.3" fill="#fff" stroke="#fff" stroke-width="0.15" >60</text>
<polyline points="939.4,232.6 943.2,243.9 939,253.8 939.4,232.6 939,253.8 939,263.7 947.7,274.5 962.5,281 986.7,271" fill="none" stroke="#ff0000" stroke-width="2" stroke-linejoin="round" stroke-linecap="round"/>
<polyline points="985.9,272.4 986.6,277.1 992.5,289 997.3,291.4 1066.1,302.5 1103,305.8 1172,295.9 1162,288.2 1166.7,283.6" fill="none" stroke="#00ff00" stroke-width="2" stroke-linejoin="round" stroke-linecap="round"/>
<polyline points="1166.7,283.6 1179,273.5 1179,271.3 1169,269 1169,250" fill="none" stroke="#ffff00" stroke-width="2" stroke-linejoin="round" stroke-linecap="round"/>
<polyline points="1169,250 1169,248.3 1155.2,239.1 1166.7,228.4 1181,220.5" fill="none" stroke="#00ffff" stroke-width="2" stroke-linejoin="round" stroke-linecap="round"/>
<polyline points="1181,225.5 1165.9,240.6 1156.7,248.3 1146,252.1" fill="none" stroke="#00ffff" stroke-width="2" stroke-linejoin="round" stroke-linecap="round"/>
<polyline points="932.4,261.1 938.1,254.7 972.6,249.6 968.2,233" fill="none" stroke="#ff00ff" stroke-width="2" stroke-linejoin="round" stroke-linecap="round"/>
<line x1="932.2" y1="261.3" x2="936" y2="257" stroke="#ff00ff" stroke-width="3.5" stroke-linecap="round"/>
<circle cx="1018.7" cy="229.7" r="3" fill="none" stroke="#2090dd" stroke-width="1.3" />
<text x="1022.2" y="244.6" font-size="10.2" fill="#2299dd" stroke="#2299dd" stroke-width="0.15" >271/27 LM</text>
<circle cx="1062.1" cy="255.3" r="3" fill="none" stroke="#ffffff" stroke-width="1.5" />
<text x="1066.6" y="266.9" font-size="10.2" fill="#fff" stroke="#fff" stroke-width="0.15" >UP=282/43</text>
<rect x="1016.5" y="299.2" width="8" height="8" fill="none" stroke="#c8961e" stroke-width="2" />
<text x="1025" y="310.3" font-size="10.2" fill="#c8901e" stroke="#c8901e" stroke-width="0.15" >308/36</text>
<circle cx="997.3" cy="316.3" r="3" fill="none" stroke="#f06464" stroke-width="1.3" />
<text x="1001.6" y="331" font-size="10.2" fill="#ff6868" stroke="#ff6868" stroke-width="0.15" >325/35 RM</text>
</g>
<line x1="590" y1="24.5" x2="651" y2="24.5" stroke="#fff" stroke-width="1" shape-rendering="crispEdges"/>
<line x1="650.5" y1="24" x2="650.5" y2="565" stroke="#fff" stroke-width="1" shape-rendering="crispEdges"/>
<line x1="651.5" y1="24" x2="651.5" y2="565" stroke="#fff" stroke-width="1" shape-rendering="crispEdges"/>
<line x1="651" y1="24.5" x2="692" y2="24.5" stroke="#fff" stroke-width="1" shape-rendering="crispEdges"/>
<line x1="590" y1="565" x2="692" y2="565" stroke="#fff" stroke-width="2" shape-rendering="crispEdges"/>
<line x1="692" y1="24" x2="692" y2="566" stroke="#fff" stroke-width="2" shape-rendering="crispEdges"/>
<line x1="691" y1="24.5" x2="1180" y2="24.5" stroke="#fff" stroke-width="1" shape-rendering="crispEdges"/>
<line x1="1179" y1="24" x2="1179" y2="566" stroke="#fff" stroke-width="2" shape-rendering="crispEdges"/>
<line x1="691" y1="432" x2="1180" y2="432" stroke="#fff" stroke-width="2" shape-rendering="crispEdges"/>
<line x1="691" y1="565" x2="1180" y2="565" stroke="#fff" stroke-width="2" shape-rendering="crispEdges"/>
<rect x="2.5" y="588.5" width="1176" height="193" fill="none" stroke="#3399cc" stroke-width="3" shape-rendering="crispEdges"/>
<line x1="752" y1="433" x2="752" y2="564" stroke="#0b3d78" stroke-width="2" shape-rendering="crispEdges"/>
<line x1="693" y1="498" x2="812" y2="498" stroke="#0b3d78" stroke-width="2" shape-rendering="crispEdges"/>
<line x1="752" y1="498" x2="770.5" y2="523.5" stroke="#fff" stroke-width="2" stroke-linecap="round"/>
<text x="807" y="444" font-size="10.8" fill="#fff" stroke="#fff" stroke-width="0.15" text-anchor="end" >-- deg</text>
<text x="697" y="561.5" font-size="10.3" fill="#fff" stroke="#fff" stroke-width="0.15" >Storm Slinky</text>
<line x1="813" y1="432" x2="813" y2="565" stroke="#fff" stroke-width="2" shape-rendering="crispEdges"/>
<text x="819" y="557" font-size="8" fill="#fff" stroke="#fff" stroke-width="0.15" text-anchor="middle" >90</text>
<line x1="814" y1="453" x2="819" y2="453" stroke="#a8a8a8" stroke-width="2" shape-rendering="crispEdges"/>
<line x1="929" y1="453" x2="934" y2="453" stroke="#a8a8a8" stroke-width="2" shape-rendering="crispEdges"/>
<text x="833.4" y="456.1" font-size="8.6" fill="#fff" stroke="#fff" stroke-width="0.15" text-anchor="end" >500</text>
<line x1="814" y1="474" x2="819" y2="474" stroke="#a8a8a8" stroke-width="2" shape-rendering="crispEdges"/>
<line x1="929" y1="474" x2="934" y2="474" stroke="#a8a8a8" stroke-width="2" shape-rendering="crispEdges"/>
<text x="833.4" y="477.1" font-size="8.6" fill="#fff" stroke="#fff" stroke-width="0.15" text-anchor="end" >600</text>
<line x1="814" y1="495" x2="819" y2="495" stroke="#a8a8a8" stroke-width="2" shape-rendering="crispEdges"/>
<line x1="929" y1="495" x2="934" y2="495" stroke="#a8a8a8" stroke-width="2" shape-rendering="crispEdges"/>
<text x="833.4" y="498.1" font-size="8.6" fill="#fff" stroke="#fff" stroke-width="0.15" text-anchor="end" >700</text>
<line x1="814" y1="517" x2="819" y2="517" stroke="#a8a8a8" stroke-width="2" shape-rendering="crispEdges"/>
<line x1="929" y1="517" x2="934" y2="517" stroke="#a8a8a8" stroke-width="2" shape-rendering="crispEdges"/>
<text x="833.4" y="520.1" font-size="8.6" fill="#fff" stroke="#fff" stroke-width="0.15" text-anchor="end" >800</text>
<line x1="814" y1="538" x2="819" y2="538" stroke="#a8a8a8" stroke-width="2" shape-rendering="crispEdges"/>
<line x1="929" y1="538" x2="934" y2="538" stroke="#a8a8a8" stroke-width="2" shape-rendering="crispEdges"/>
<text x="833.4" y="541.1" font-size="8.6" fill="#fff" stroke="#fff" stroke-width="0.15" text-anchor="end" >900</text>
<line x1="814" y1="559" x2="819" y2="559" stroke="#a8a8a8" stroke-width="2" shape-rendering="crispEdges"/>
<line x1="929" y1="559" x2="934" y2="559" stroke="#a8a8a8" stroke-width="2" shape-rendering="crispEdges"/>
<text x="833.4" y="562.1" font-size="8.6" fill="#fff" stroke="#fff" stroke-width="0.15" text-anchor="end" >1000</text>
<line x1="843" y1="433" x2="843" y2="438" stroke="#a8a8a8" stroke-width="2" shape-rendering="crispEdges"/>
<line x1="843" y1="559" x2="843" y2="564" stroke="#a8a8a8" stroke-width="2" shape-rendering="crispEdges"/>
<text x="851.3" y="558" font-size="8" fill="#fff" stroke="#fff" stroke-width="0.15" text-anchor="middle" >300</text>
<line x1="878" y1="433" x2="878" y2="438" stroke="#a8a8a8" stroke-width="2" shape-rendering="crispEdges"/>
<line x1="878" y1="559" x2="878" y2="564" stroke="#a8a8a8" stroke-width="2" shape-rendering="crispEdges"/>
<text x="886.3" y="558" font-size="8" fill="#fff" stroke="#fff" stroke-width="0.15" text-anchor="middle" >310</text>
<line x1="913" y1="433" x2="913" y2="438" stroke="#a8a8a8" stroke-width="2" shape-rendering="crispEdges"/>
<line x1="913" y1="559" x2="913" y2="564" stroke="#a8a8a8" stroke-width="2" shape-rendering="crispEdges"/>
<text x="921.3" y="558" font-size="8" fill="#fff" stroke="#fff" stroke-width="0.15" text-anchor="middle" >320</text>
<text x="873.2" y="465" font-size="7.9" fill="#fff" stroke="#fff" stroke-width="0.15" text-anchor="middle" >Theta-E</text>
<text x="873.2" y="474.6" font-size="7.9" fill="#fff" stroke="#fff" stroke-width="0.15" text-anchor="middle" >v.</text>
<text x="873.2" y="484.2" font-size="7.9" fill="#fff" stroke="#fff" stroke-width="0.15" text-anchor="middle" >Pres</text>
<polyline points="915.5,433 910,452.5 900.7,460 876,468 860,470.5 849.5,480.5 847.5,489 854.3,490.5 858.5,495 861.5,504 856.7,509 859,513 851.5,529.5 854,530 853.5,535.5 858,537.5 858.5,544 852.5,556 860,557" fill="none" stroke="#ffff00" stroke-width="2" stroke-linejoin="round"/>
<line x1="935" y1="432" x2="935" y2="565" stroke="#fff" stroke-width="2" shape-rendering="crispEdges"/>
<line x1="951" y1="433" x2="951" y2="437" stroke="#a8a8a8" stroke-width="2" shape-rendering="crispEdges"/>
<line x1="951" y1="559" x2="951" y2="564" stroke="#a8a8a8" stroke-width="2" shape-rendering="crispEdges"/>
<line x1="968" y1="433" x2="968" y2="437" stroke="#a8a8a8" stroke-width="2" shape-rendering="crispEdges"/>
<line x1="968" y1="559" x2="968" y2="564" stroke="#a8a8a8" stroke-width="2" shape-rendering="crispEdges"/>
<line x1="984" y1="433" x2="984" y2="437" stroke="#a8a8a8" stroke-width="2" shape-rendering="crispEdges"/>
<line x1="984" y1="559" x2="984" y2="564" stroke="#a8a8a8" stroke-width="2" shape-rendering="crispEdges"/>
<line x1="1001" y1="433" x2="1001" y2="437" stroke="#d8a8d8" stroke-width="2" shape-rendering="crispEdges"/>
<line x1="1001" y1="559" x2="1001" y2="564" stroke="#a8a8a8" stroke-width="2" shape-rendering="crispEdges"/>
<line x1="1018" y1="433" x2="1018" y2="437" stroke="#a8a8a8" stroke-width="2" shape-rendering="crispEdges"/>
<line x1="1018" y1="559" x2="1018" y2="564" stroke="#a8a8a8" stroke-width="2" shape-rendering="crispEdges"/>
<line x1="1034" y1="433" x2="1034" y2="437" stroke="#a8a8a8" stroke-width="2" shape-rendering="crispEdges"/>
<line x1="1034" y1="559" x2="1034" y2="564" stroke="#a8a8a8" stroke-width="2" shape-rendering="crispEdges"/>
<line x1="1051" y1="433" x2="1051" y2="437" stroke="#d8a8d8" stroke-width="2" shape-rendering="crispEdges"/>
<line x1="1051" y1="559" x2="1051" y2="564" stroke="#a8a8a8" stroke-width="2" shape-rendering="crispEdges"/>
<line x1="936" y1="446" x2="941" y2="446" stroke="#a8a8a8" stroke-width="2" shape-rendering="crispEdges"/>
<line x1="1051" y1="446" x2="1056" y2="446" stroke="#a8a8a8" stroke-width="2" shape-rendering="crispEdges"/>
<text x="955.5" y="449.1" font-size="8" fill="#fff" stroke="#fff" stroke-width="0.15" text-anchor="end" >14</text>
<line x1="936" y1="463" x2="941" y2="463" stroke="#a8a8a8" stroke-width="2" shape-rendering="crispEdges"/>
<line x1="1051" y1="463" x2="1056" y2="463" stroke="#a8a8a8" stroke-width="2" shape-rendering="crispEdges"/>
<text x="955.5" y="466.1" font-size="8" fill="#fff" stroke="#fff" stroke-width="0.15" text-anchor="end" >12</text>
<line x1="936" y1="479" x2="941" y2="479" stroke="#a8a8a8" stroke-width="2" shape-rendering="crispEdges"/>
<line x1="1051" y1="479" x2="1056" y2="479" stroke="#a8a8a8" stroke-width="2" shape-rendering="crispEdges"/>
<text x="955.5" y="482.1" font-size="8" fill="#fff" stroke="#fff" stroke-width="0.15" text-anchor="end" >10</text>
<line x1="936" y1="496" x2="941" y2="496" stroke="#a8a8a8" stroke-width="2" shape-rendering="crispEdges"/>
<line x1="1051" y1="496" x2="1056" y2="496" stroke="#a8a8a8" stroke-width="2" shape-rendering="crispEdges"/>
<text x="955.5" y="499.1" font-size="8" fill="#fff" stroke="#fff" stroke-width="0.15" text-anchor="end" >8</text>
<line x1="936" y1="512" x2="941" y2="512" stroke="#a8a8a8" stroke-width="2" shape-rendering="crispEdges"/>
<line x1="1051" y1="512" x2="1056" y2="512" stroke="#a8a8a8" stroke-width="2" shape-rendering="crispEdges"/>
<text x="955.5" y="515.1" font-size="8" fill="#fff" stroke="#fff" stroke-width="0.15" text-anchor="end" >6</text>
<line x1="936" y1="529" x2="941" y2="529" stroke="#a8a8a8" stroke-width="2" shape-rendering="crispEdges"/>
<line x1="1051" y1="529" x2="1056" y2="529" stroke="#a8a8a8" stroke-width="2" shape-rendering="crispEdges"/>
<text x="955.5" y="532.1" font-size="8" fill="#fff" stroke="#fff" stroke-width="0.15" text-anchor="end" >4</text>
<line x1="936" y1="545" x2="941" y2="545" stroke="#a8a8a8" stroke-width="2" shape-rendering="crispEdges"/>
<line x1="1051" y1="545" x2="1056" y2="545" stroke="#a8a8a8" stroke-width="2" shape-rendering="crispEdges"/>
<text x="955.5" y="548.1" font-size="8" fill="#fff" stroke="#fff" stroke-width="0.15" text-anchor="end" >2</text>
<line x1="959" y1="434" x2="959" y2="564" stroke="#a0a0a0" stroke-width="2" stroke-dasharray="3.5 2" shape-rendering="crispEdges"/>
<line x1="1001" y1="437" x2="1001" y2="496" stroke="#6a0a6a" stroke-width="2" stroke-dasharray="3.5 2" shape-rendering="crispEdges"/>
<line x1="1051" y1="437" x2="1051" y2="496" stroke="#6a0a6a" stroke-width="2" stroke-dasharray="3.5 2" shape-rendering="crispEdges"/>
<text x="973.5" y="447.5" font-size="7.9" fill="#fff" stroke="#fff" stroke-width="0.15" text-anchor="middle" >SR Wind</text>
<text x="973.5" y="457.4" font-size="7.9" fill="#fff" stroke="#fff" stroke-width="0.15" text-anchor="middle" >v.</text>
<text x="973.5" y="467.3" font-size="7.9" fill="#fff" stroke="#fff" stroke-width="0.15" text-anchor="middle" >Height</text>
<text x="1021.8" y="456.4" font-size="7.9" fill="#b414b4" stroke="#b414b4" stroke-width="0.15" text-anchor="middle" >Classic</text>
<text x="1021.8" y="465.9" font-size="7.9" fill="#b414b4" stroke="#b414b4" stroke-width="0.15" text-anchor="middle" >Supercell</text>
<line x1="1038" y1="470" x2="1038" y2="489" stroke="#9b19e6" stroke-width="2" shape-rendering="crispEdges"/>
<line x1="1009" y1="512" x2="1009" y2="530" stroke="#6495ed" stroke-width="2" shape-rendering="crispEdges"/>
<line x1="980" y1="545" x2="980" y2="564" stroke="#a00000" stroke-width="2" shape-rendering="crispEdges"/>
<polyline points="1008.5,456 1010.5,454 1056.6,470.4 1055,472.5 1040,476.7 1029.8,482.5 1034.9,487 1031.7,490.2 1037.4,497.8 1038.5,502.9 1025.9,516.4 1031.7,522.4 1023.4,521.3 1008,523.9 981.2,525.8 963.3,527.7 947.4,532.2 959.5,538.6 958.9,541.7 968.4,544.9 979.9,546.9 990.8,552.2 981.2,553.2 981.2,557.7 972.9,562.2 982.5,563.5" fill="none" stroke="#ff0000" stroke-width="2" stroke-linejoin="round"/>
<line x1="1057" y1="432" x2="1057" y2="565" stroke="#fff" stroke-width="2" shape-rendering="crispEdges"/>
<line x1="1058" y1="452.5" x2="1178" y2="452.5" stroke="#fff" stroke-width="1" shape-rendering="crispEdges"/>
<text x="1117.5" y="447" font-size="10.2" fill="#fff" stroke="#fff" stroke-width="0.15" text-anchor="middle" >Potential Hazard Type</text>
<text x="1117.5" y="507.9" font-size="13.5" fill="#f8c410" text-anchor="middle" >NONE</text>
<text x="40.2" y="601.3" font-size="10.4" fill="#fff" stroke="#fff" stroke-width="0.15" text-anchor="middle" >PCL</text>
<text x="76.3" y="601.3" font-size="10.4" fill="#fff" stroke="#fff" stroke-width="0.15" text-anchor="middle" >CAPE</text>
<text x="113.4" y="601.3" font-size="10.4" fill="#fff" stroke="#fff" stroke-width="0.15" text-anchor="middle" >CINH</text>
<text x="149.8" y="601.3" font-size="10.4" fill="#fff" stroke="#fff" stroke-width="0.15" text-anchor="middle" >LCL</text>
<text x="187.5" y="601.3" font-size="10.4" fill="#fff" stroke="#fff" stroke-width="0.15" text-anchor="middle" >LI</text>
<text x="222.8" y="601.3" font-size="10.4" fill="#fff" stroke="#fff" stroke-width="0.15" text-anchor="middle" >LFC</text>
<text x="260.2" y="601.3" font-size="10.4" fill="#fff" stroke="#fff" stroke-width="0.15" text-anchor="middle" >EL</text>
<line x1="4" y1="601.5" x2="298" y2="601.5" stroke="#fff" stroke-width="1" shape-rendering="crispEdges"/>
<text x="40.2" y="615.7" font-size="10.4" fill="#fff" stroke="#fff" stroke-width="0.15" text-anchor="middle" >SFC</text>
<text x="76.3" y="615.7" font-size="10.4" fill="#fff" stroke="#fff" stroke-width="0.15" text-anchor="middle" >0</text>
<text x="113.4" y="615.7" font-size="10.4" fill="#fff" stroke="#fff" stroke-width="0.15" text-anchor="middle" >0</text>
<text x="149.8" y="615.7" font-size="10.4" fill="#fff" stroke="#fff" stroke-width="0.15" text-anchor="middle" >2589</text>
<text x="187.5" y="615.7" font-size="10.4" fill="#fff" stroke="#fff" stroke-width="0.15" text-anchor="middle" >14</text>
<text x="222.8" y="615.7" font-size="10.4" fill="#fff" stroke="#fff" stroke-width="0.15" text-anchor="middle" >--</text>
<text x="260.2" y="615.7" font-size="10.4" fill="#fff" stroke="#fff" stroke-width="0.15" text-anchor="middle" >2589</text>
<text x="40.2" y="626.63" font-size="10.4" fill="#fff" stroke="#fff" stroke-width="0.15" text-anchor="middle" >EFF</text>
<text x="76.3" y="626.63" font-size="10.4" fill="#fff" stroke="#fff" stroke-width="0.15" text-anchor="middle" >0</text>
<text x="113.4" y="626.63" font-size="10.4" fill="#fff" stroke="#fff" stroke-width="0.15" text-anchor="middle" >0</text>
<text x="149.8" y="626.63" font-size="10.4" fill="#fff" stroke="#fff" stroke-width="0.15" text-anchor="middle" >2589</text>
<text x="187.5" y="626.63" font-size="10.4" fill="#fff" stroke="#fff" stroke-width="0.15" text-anchor="middle" >14</text>
<text x="222.8" y="626.63" font-size="10.4" fill="#fff" stroke="#fff" stroke-width="0.15" text-anchor="middle" >--</text>
<text x="260.2" y="626.63" font-size="10.4" fill="#fff" stroke="#fff" stroke-width="0.15" text-anchor="middle" >2589</text>
<text x="40.2" y="637.56" font-size="10.4" fill="#00ffff" stroke="#00ffff" stroke-width="0.15" text-anchor="middle" >ML</text>
<text x="76.3" y="637.56" font-size="10.4" fill="#fff" stroke="#fff" stroke-width="0.15" text-anchor="middle" >0</text>
<text x="113.4" y="637.56" font-size="10.4" fill="#fff" stroke="#fff" stroke-width="0.15" text-anchor="middle" >0</text>
<text x="149.8" y="637.56" font-size="10.4" fill="#fff" stroke="#fff" stroke-width="0.15" text-anchor="middle" >2566</text>
<text x="187.5" y="637.56" font-size="10.4" fill="#fff" stroke="#fff" stroke-width="0.15" text-anchor="middle" >15</text>
<text x="222.8" y="637.56" font-size="10.4" fill="#fff" stroke="#fff" stroke-width="0.15" text-anchor="middle" >--</text>
<text x="260.2" y="637.56" font-size="10.4" fill="#fff" stroke="#fff" stroke-width="0.15" text-anchor="middle" >2566</text>
<text x="40.2" y="648.49" font-size="10.4" fill="#fff" stroke="#fff" stroke-width="0.15" text-anchor="middle" >MU</text>
<text x="76.3" y="648.49" font-size="10.4" fill="#fff" stroke="#fff" stroke-width="0.15" text-anchor="middle" >0</text>
<text x="113.4" y="648.49" font-size="10.4" fill="#fff" stroke="#fff" stroke-width="0.15" text-anchor="middle" >0</text>
<text x="149.8" y="648.49" font-size="10.4" fill="#fff" stroke="#fff" stroke-width="0.15" text-anchor="middle" >3833</text>
<text x="187.5" y="648.49" font-size="10.4" fill="#fff" stroke="#fff" stroke-width="0.15" text-anchor="middle" >14</text>
<text x="222.8" y="648.49" font-size="10.4" fill="#fff" stroke="#fff" stroke-width="0.15" text-anchor="middle" >--</text>
<text x="260.2" y="648.49" font-size="10.4" fill="#fff" stroke="#fff" stroke-width="0.15" text-anchor="middle" >3833</text>
<rect x="6.5" y="627.5" width="292" height="12" fill="none" stroke="#7a4a1e" stroke-width="1" shape-rendering="crispEdges"/>
<line x1="4" y1="652.5" x2="298" y2="652.5" stroke="#fff" stroke-width="1" shape-rendering="crispEdges"/>
<text x="9.4" y="665.1" font-size="10.4" fill="#fff" stroke="#fff" stroke-width="0.15" >PW = 0.35in</text>
<text x="106.5" y="665.1" font-size="10.4" fill="#fff" stroke="#fff" stroke-width="0.15" >K = 0</text>
<text x="180.3" y="665.1" font-size="10.4" fill="#fff" stroke="#fff" stroke-width="0.15" >WNDG = 0.0</text>
<text x="9.4" y="676.07" font-size="10.4" fill="#fff" stroke="#fff" stroke-width="0.15" >MeanW = 3.4g/kg</text>
<text x="106.5" y="676.07" font-size="10.4" fill="#fff" stroke="#fff" stroke-width="0.15" >TT = 24</text>
<text x="180.3" y="676.07" font-size="10.4" fill="#fff" stroke="#fff" stroke-width="0.15" >TEI = 4</text>
<text x="9.4" y="687.04" font-size="10.4" fill="#fff" stroke="#fff" stroke-width="0.15" >LowRH = 32%</text>
<text x="106.5" y="687.04" font-size="10.4" fill="#fff" stroke="#fff" stroke-width="0.15" >ConvT = 107F</text>
<text x="180.3" y="687.04" font-size="10.4" fill="#fff" stroke="#fff" stroke-width="0.15" >3CAPE = 0</text>
<text x="9.4" y="698.01" font-size="10.4" fill="#fff" stroke="#fff" stroke-width="0.15" >MidRH = 36%</text>
<text x="106.5" y="698.01" font-size="10.4" fill="#fff" stroke="#fff" stroke-width="0.15" >maxT = 70F</text>
<text x="180.3" y="698.01" font-size="10.4" fill="#fff" stroke="#fff" stroke-width="0.15" >MBURST = 0</text>
<text x="9.4" y="708.98" font-size="10.4" fill="#fff" stroke="#fff" stroke-width="0.15" >DCAPE = 764</text>
<text x="106.5" y="708.98" font-size="10.4" fill="#fff" stroke="#fff" stroke-width="0.15" >ESP = 0</text>
<text x="9.4" y="719.95" font-size="10.4" fill="#fff" stroke="#fff" stroke-width="0.15" >DownT = 47F</text>
<text x="106.5" y="719.95" font-size="10.4" fill="#fff" stroke="#fff" stroke-width="0.15" >MMP = 0.0</text>
<text x="180.3" y="719.95" font-size="10.4" fill="#fff" stroke="#fff" stroke-width="0.15" >SigSvr = 0 m3/s3</text>
<line x1="4" y1="723.5" x2="298" y2="723.5" stroke="#fff" stroke-width="1" shape-rendering="crispEdges"/>
<line x1="204.5" y1="723" x2="204.5" y2="780" stroke="#fff" stroke-width="1" shape-rendering="crispEdges"/>
<text x="9" y="736" font-size="10.4" fill="#ff0000" stroke="#ff0000" stroke-width="0.15" >Sfc-3km AGL LR = 8.5 C/km</text>
<text x="9" y="746.97" font-size="10.4" fill="#00ff00" stroke="#00ff00" stroke-width="0.15" >3-6km AGL LR = 4.0 C/km</text>
<text x="9" y="757.94" font-size="10.4" fill="#00ff00" stroke="#00ff00" stroke-width="0.15" >850-500mb LR = 4.8 C/km</text>
<text x="9" y="768.91" font-size="10.4" fill="#00ff00" stroke="#00ff00" stroke-width="0.15" >700-500mb LR = 3.2 C/km</text>
<text x="209.5" y="735.9" font-size="10.4" fill="#fff" stroke="#fff" stroke-width="0.15" >Supercell = 0.0</text>
<text x="209.5" y="746.87" font-size="10.4" fill="#fff" stroke="#fff" stroke-width="0.15" >STP (cin) = 0.0</text>
<text x="209.5" y="757.84" font-size="10.4" fill="#fff" stroke="#fff" stroke-width="0.15" >STP (fix) = -0.0</text>
<text x="209.5" y="768.81" font-size="10.4" fill="#fff" stroke="#fff" stroke-width="0.15" >SHIP = 0.0</text>
<line x1="298.5" y1="590" x2="298.5" y2="780" stroke="#3399cc" stroke-width="1" shape-rendering="crispEdges"/>
<line x1="590.5" y1="590" x2="590.5" y2="780" stroke="#3399cc" stroke-width="1" shape-rendering="crispEdges"/>
<text x="385.9" y="602.3" font-size="10.4" fill="#fff" stroke="#fff" stroke-width="0.15" text-anchor="middle" >SRH (m2/s2)</text>
<text x="459" y="602.3" font-size="10.4" fill="#fff" stroke="#fff" stroke-width="0.15" text-anchor="middle" >Shear (kt)</text>
<text x="517.3" y="602.3" font-size="10.4" fill="#fff" stroke="#fff" stroke-width="0.15" text-anchor="middle" >MnWind</text>
<text x="570.5" y="602.3" font-size="10.4" fill="#fff" stroke="#fff" stroke-width="0.15" text-anchor="middle" >SRW</text>
<line x1="299" y1="604.5" x2="590" y2="604.5" stroke="#fff" stroke-width="1" shape-rendering="crispEdges"/>
<text x="303.5" y="615.5" font-size="10.4" fill="#fff" stroke="#fff" stroke-width="0.15" >SFC-1km</text>
<text x="413" y="615.5" font-size="10.4" fill="#fff" stroke="#fff" stroke-width="0.15" text-anchor="end" >-70</text>
<text x="472" y="615.5" font-size="10.4" fill="#fff" stroke="#fff" stroke-width="0.15" text-anchor="end" >12</text>
<text x="531" y="615.5" font-size="10.4" fill="#fff" stroke="#fff" stroke-width="0.15" text-anchor="end" >333/10</text>
<text x="589.3" y="615.5" font-size="10.4" fill="#fff" stroke="#fff" stroke-width="0.15" text-anchor="end" >142/26</text>
<text x="303.5" y="626.5" font-size="10.4" fill="#fff" stroke="#fff" stroke-width="0.15" >SFC-3km</text>
<text x="413" y="626.5" font-size="10.4" fill="#fff" stroke="#fff" stroke-width="0.15" text-anchor="end" >-52</text>
<text x="472" y="626.5" font-size="10.4" fill="#fff" stroke="#fff" stroke-width="0.15" text-anchor="end" >15</text>
<text x="531" y="626.5" font-size="10.4" fill="#fff" stroke="#fff" stroke-width="0.15" text-anchor="end" >332/11</text>
<text x="589.3" y="626.5" font-size="10.4" fill="#fff" stroke="#fff" stroke-width="0.15" text-anchor="end" >141/24</text>
<text x="303.5" y="637.6" font-size="10.4" fill="#fff" stroke="#fff" stroke-width="0.15" >Eff Inflow Layer</text>
<text x="413" y="637.6" font-size="10.4" fill="#fff" stroke="#fff" stroke-width="0.15" text-anchor="end" >--</text>
<text x="472" y="637.6" font-size="10.4" fill="#fff" stroke="#fff" stroke-width="0.15" text-anchor="end" >--</text>
<text x="531" y="637.6" font-size="10.4" fill="#fff" stroke="#fff" stroke-width="0.15" text-anchor="end" >--/--</text>
<text x="589.3" y="637.6" font-size="10.4" fill="#fff" stroke="#fff" stroke-width="0.15" text-anchor="end" >--/--</text>
<text x="303.5" y="653.6" font-size="10.4" fill="#fff" stroke="#fff" stroke-width="0.15" >SFC-6km</text>
<text x="472" y="653.6" font-size="10.4" fill="#fff" stroke="#fff" stroke-width="0.15" text-anchor="end" >68</text>
<text x="531" y="653.6" font-size="10.4" fill="#fff" stroke="#fff" stroke-width="0.15" text-anchor="end" >306/23</text>
<text x="589.3" y="653.6" font-size="10.4" fill="#fff" stroke="#fff" stroke-width="0.15" text-anchor="end" >175/15</text>
<text x="303.5" y="664.5" font-size="10.4" fill="#fff" stroke="#fff" stroke-width="0.15" >SFC-8km</text>
<text x="472" y="664.5" font-size="10.4" fill="#fff" stroke="#fff" stroke-width="0.15" text-anchor="end" >69</text>
<text x="531" y="664.5" font-size="10.4" fill="#fff" stroke="#fff" stroke-width="0.15" text-anchor="end" >299/29</text>
<text x="589.3" y="664.5" font-size="10.4" fill="#fff" stroke="#fff" stroke-width="0.15" text-anchor="end" >198/16</text>
<text x="303.5" y="676.2" font-size="10.4" fill="#c8901e" stroke="#c8901e" stroke-width="0.15" >LCL-EL (Cloud Layer)</text>
<text x="472" y="676.2" font-size="10.4" fill="#fff" stroke="#fff" stroke-width="0.15" text-anchor="end" >0</text>
<text x="531" y="676.2" font-size="10.4" fill="#c8901e" stroke="#c8901e" stroke-width="0.15" text-anchor="end" >308/36</text>
<text x="589.3" y="676.2" font-size="10.4" fill="#fff" stroke="#fff" stroke-width="0.15" text-anchor="end" >229/10</text>
<text x="303.5" y="686.6" font-size="10.4" fill="#fff" stroke="#fff" stroke-width="0.15" >Eff Shear (EBWD)</text>
<text x="472" y="686.6" font-size="10.4" fill="#fff" stroke="#fff" stroke-width="0.15" text-anchor="end" >--</text>
<text x="531" y="686.6" font-size="10.4" fill="#fff" stroke="#fff" stroke-width="0.15" text-anchor="end" >--/--</text>
<text x="589.3" y="686.6" font-size="10.4" fill="#fff" stroke="#fff" stroke-width="0.15" text-anchor="end" >--/--</text>
<text x="303.5" y="702.7" font-size="10.4" fill="#fff" stroke="#fff" stroke-width="0.15" >BRN Shear =</text>
<text x="472" y="702.7" font-size="10.4" fill="#fff" stroke="#fff" stroke-width="0.15" text-anchor="end" >21 m2/s2</text>
<text x="303.5" y="713.5" font-size="10.4" fill="#fff" stroke="#fff" stroke-width="0.15" >4-6km SR Wind =</text>
<text x="472" y="713.5" font-size="10.4" fill="#fff" stroke="#fff" stroke-width="0.15" text-anchor="end" >262/36 kt</text>
<text x="303.5" y="740.5" font-size="10.4" fill="#ff6464" stroke="#ff6464" stroke-width="0.15" >Bunkers Right =</text>
<text x="472" y="740.5" font-size="10.4" fill="#ff6464" stroke="#ff6464" stroke-width="0.15" text-anchor="end" >325/35 kt</text>
<text x="303.5" y="752" font-size="10.4" fill="#2299dd" stroke="#2299dd" stroke-width="0.15" >Bunkers Left =</text>
<text x="472" y="752" font-size="10.4" fill="#2299dd" stroke="#2299dd" stroke-width="0.15" text-anchor="end" >271/27 kt</text>
<text x="303.5" y="762.5" font-size="10.4" fill="#fff" stroke="#fff" stroke-width="0.15" >Corfidi Downshear =</text>
<text x="472" y="762.5" font-size="10.4" fill="#fff" stroke="#fff" stroke-width="0.15" text-anchor="end" >286/90 kt</text>
<text x="303.5" y="774" font-size="10.4" fill="#fff" stroke="#fff" stroke-width="0.15" >Corfidi Upshear =</text>
<text x="472" y="774" font-size="10.4" fill="#fff" stroke="#fff" stroke-width="0.15" text-anchor="end" >282/43 kt</text>
<text x="303.5" y="730.1" font-size="10.4" fill="#fff" stroke="#fff" stroke-width="0.15" >...Storm Motion Vectors...</text>
<text x="531.7" y="762" font-size="10.4" fill="#fff" stroke="#fff" stroke-width="0.15" text-anchor="middle" >1km &amp; 6km AGL</text>
<text x="531.7" y="773.4" font-size="10.4" fill="#fff" stroke="#fff" stroke-width="0.15" text-anchor="middle" >Wind Barbs</text>
<path d="M532.4 724.9L508 718.8M508 718.8L510.84 709.92L512.07 719.82M513.82 720.26L516.08 711.23M517.99 721.3L520.25 712.28M522.16 722.34L524.42 713.32" fill="none" stroke="#ff0000" stroke-width="1.1" stroke-linejoin="round" stroke-linecap="round"/>
<polyline points="532.2,725 530.3,700.2 539.8,699" fill="none" stroke="#1ec8a0" stroke-width="1.3" />
<line x1="884.5" y1="590" x2="884.5" y2="780" stroke="#3399cc" stroke-width="1" shape-rendering="crispEdges"/>
<text x="737.8" y="607" font-size="16.3" fill="#fff" text-anchor="middle" >SARS - Sounding Analogue System</text>
<line x1="591" y1="614.5" x2="884" y2="614.5" stroke="#fff" stroke-width="1" shape-rendering="crispEdges"/>
<line x1="738.5" y1="614" x2="738.5" y2="780" stroke="#fff" stroke-width="1" shape-rendering="crispEdges"/>
<text x="664.4" y="630.3" font-size="14.2" fill="#fff" text-anchor="middle" textLength="81.5" lengthAdjust="spacingAndGlyphs">SUPERCELL</text>
<text x="811.2" y="630.3" font-size="14.2" fill="#fff" text-anchor="middle" textLength="89.6" lengthAdjust="spacingAndGlyphs">SEVERE HAIL</text>
<text x="664.4" y="676.2" font-size="10.1" fill="#f5c000" stroke="#f5c000" stroke-width="0.15" text-anchor="middle" >No Quality Matches</text>
<text x="811.2" y="676.2" font-size="10.1" fill="#f5c000" stroke="#f5c000" stroke-width="0.15" text-anchor="middle" >No Quality Matches</text>
<text x="1030.9" y="602.8" font-size="12.4" fill="#fff" text-anchor="middle" >Effective Layer STP (with CIN)</text>
<line x1="885" y1="763" x2="1177" y2="763" stroke="#1ec8c8" stroke-width="2" shape-rendering="crispEdges"/>
<line x1="886" y1="763" x2="1177" y2="763" stroke="#2c2828" stroke-width="2" stroke-dasharray="4 2" shape-rendering="crispEdges"/>
<text x="894.5" y="766.5" font-size="10.2" fill="#fff" stroke="#fff" stroke-width="0.15" text-anchor="middle" >0</text>
<line x1="886" y1="749" x2="1177" y2="749" stroke="#2c2828" stroke-width="2" stroke-dasharray="4 2" shape-rendering="crispEdges"/>
<rect x="888.5" y="744.2" width="12" height="9" fill="#000" />
<text x="894.5" y="752.3" font-size="10.2" fill="#fff" stroke="#fff" stroke-width="0.15" text-anchor="middle" >1</text>
<line x1="886" y1="735" x2="1177" y2="735" stroke="#2c2828" stroke-width="2" stroke-dasharray="4 2" shape-rendering="crispEdges"/>
<rect x="888.5" y="730.2" width="12" height="9" fill="#000" />
<text x="894.5" y="738.3" font-size="10.2" fill="#fff" stroke="#fff" stroke-width="0.15" text-anchor="middle" >2</text>
<line x1="886" y1="721" x2="1177" y2="721" stroke="#2c2828" stroke-width="2" stroke-dasharray="4 2" shape-rendering="crispEdges"/>
<rect x="888.5" y="716.4" width="12" height="9" fill="#000" />
<text x="894.5" y="724.5" font-size="10.2" fill="#fff" stroke="#fff" stroke-width="0.15" text-anchor="middle" >3</text>
<line x1="886" y1="708" x2="1177" y2="708" stroke="#2c2828" stroke-width="2" stroke-dasharray="4 2" shape-rendering="crispEdges"/>
<rect x="888.5" y="703.3" width="12" height="9" fill="#000" />
<text x="894.5" y="711.4" font-size="10.2" fill="#fff" stroke="#fff" stroke-width="0.15" text-anchor="middle" >4</text>
<line x1="886" y1="694" x2="1177" y2="694" stroke="#2c2828" stroke-width="2" stroke-dasharray="4 2" shape-rendering="crispEdges"/>
<rect x="888.5" y="689.3" width="12" height="9" fill="#000" />
<text x="894.5" y="697.4" font-size="10.2" fill="#fff" stroke="#fff" stroke-width="0.15" text-anchor="middle" >5</text>
<line x1="886" y1="680" x2="1177" y2="680" stroke="#2c2828" stroke-width="2" stroke-dasharray="4 2" shape-rendering="crispEdges"/>
<rect x="888.5" y="675.6" width="12" height="9" fill="#000" />
<text x="894.5" y="683.7" font-size="10.2" fill="#fff" stroke="#fff" stroke-width="0.15" text-anchor="middle" >6</text>
<line x1="886" y1="666" x2="1177" y2="666" stroke="#2c2828" stroke-width="2" stroke-dasharray="4 2" shape-rendering="crispEdges"/>
<rect x="888.5" y="661.6" width="12" height="9" fill="#000" />
<text x="894.5" y="669.7" font-size="10.2" fill="#fff" stroke="#fff" stroke-width="0.15" text-anchor="middle" >7</text>
<line x1="886" y1="653" x2="1177" y2="653" stroke="#2c2828" stroke-width="2" stroke-dasharray="4 2" shape-rendering="crispEdges"/>
<rect x="888.5" y="648.2" width="12" height="9" fill="#000" />
<text x="894.5" y="656.3" font-size="10.2" fill="#fff" stroke="#fff" stroke-width="0.15" text-anchor="middle" >8</text>
<line x1="886" y1="639" x2="1177" y2="639" stroke="#2c2828" stroke-width="2" stroke-dasharray="4 2" shape-rendering="crispEdges"/>
<rect x="888.5" y="634.1" width="12" height="9" fill="#000" />
<text x="894.5" y="642.2" font-size="10.2" fill="#fff" stroke="#fff" stroke-width="0.15" text-anchor="middle" >9</text>
<line x1="886" y1="625" x2="1177" y2="625" stroke="#2c2828" stroke-width="2" stroke-dasharray="4 2" shape-rendering="crispEdges"/>
<rect x="888.5" y="620.4" width="12" height="9" fill="#000" />
<text x="894.5" y="628.5" font-size="10.2" fill="#fff" stroke="#fff" stroke-width="0.15" text-anchor="middle" >10</text>
<line x1="886" y1="612" x2="1177" y2="612" stroke="#2c2828" stroke-width="2" stroke-dasharray="4 2" shape-rendering="crispEdges"/>
<rect x="888.5" y="607.6" width="12" height="9" fill="#000" />
<text x="894.5" y="615.7" font-size="10.2" fill="#fff" stroke="#fff" stroke-width="0.15" text-anchor="middle" >11</text>
<line x1="926.3" y1="611" x2="926.3" y2="648.7" stroke="#ff00ff" stroke-width="2" shape-rendering="crispEdges"/>
<line x1="926.3" y1="727.3" x2="926.3" y2="746.5" stroke="#ff00ff" stroke-width="2" shape-rendering="crispEdges"/>
<rect x="916" y="648.7" width="20.6" height="78.6" fill="none" stroke="#ff00ff" stroke-width="2" shape-rendering="crispEdges"/>
<line x1="916" y1="689.7" x2="936.6" y2="689.7" stroke="#ff00ff" stroke-width="2" shape-rendering="crispEdges"/>
<line x1="968.4" y1="646" x2="968.4" y2="700.6" stroke="#ff0000" stroke-width="2" shape-rendering="crispEdges"/>
<line x1="968.4" y1="749" x2="968.4" y2="760.7" stroke="#ff0000" stroke-width="2" shape-rendering="crispEdges"/>
<rect x="958.1" y="700.6" width="20.6" height="48.4" fill="none" stroke="#ff0000" stroke-width="2" shape-rendering="crispEdges"/>
<line x1="958.1" y1="729.9" x2="978.7" y2="729.9" stroke="#ff0000" stroke-width="2" shape-rendering="crispEdges"/>
<line x1="1010.4" y1="685" x2="1010.4" y2="711.7" stroke="#ff8c28" stroke-width="2" shape-rendering="crispEdges"/>
<line x1="1010.4" y1="754.2" x2="1010.4" y2="762.8" stroke="#ff8c28" stroke-width="2" shape-rendering="crispEdges"/>
<rect x="1000.1" y="711.7" width="20.6" height="42.5" fill="none" stroke="#ff8c28" stroke-width="2" shape-rendering="crispEdges"/>
<line x1="1000.1" y1="739.5" x2="1020.7" y2="739.5" stroke="#ff8c28" stroke-width="2" shape-rendering="crispEdges"/>
<line x1="1051.5" y1="699.8" x2="1051.5" y2="727" stroke="#ffff00" stroke-width="2" shape-rendering="crispEdges"/>
<line x1="1051.5" y1="758.4" x2="1051.5" y2="762.8" stroke="#ffff00" stroke-width="2" shape-rendering="crispEdges"/>
<rect x="1041.2" y="727" width="20.6" height="31.4" fill="none" stroke="#ffff00" stroke-width="2" shape-rendering="crispEdges"/>
<line x1="1041.2" y1="745.9" x2="1061.8" y2="745.9" stroke="#ffff00" stroke-width="2" shape-rendering="crispEdges"/>
<line x1="1093.7" y1="710.9" x2="1093.7" y2="734.8" stroke="#ffff00" stroke-width="2" shape-rendering="crispEdges"/>
<rect x="1083.4" y="734.8" width="20.6" height="26.2" fill="none" stroke="#ffff00" stroke-width="2" shape-rendering="crispEdges"/>
<line x1="1083.4" y1="751.9" x2="1104" y2="751.9" stroke="#ffff00" stroke-width="2" shape-rendering="crispEdges"/>
<line x1="1135.7" y1="738.2" x2="1135.7" y2="752.4" stroke="#00ff00" stroke-width="2" shape-rendering="crispEdges"/>
<rect x="1125.4" y="752.4" width="20.6" height="9.9" fill="none" stroke="#00ff00" stroke-width="2" shape-rendering="crispEdges"/>
<line x1="1125.4" y1="759.4" x2="1146" y2="759.4" stroke="#00ff00" stroke-width="2" shape-rendering="crispEdges"/>
<text x="926.3" y="775.8" font-size="10.2" fill="#fff" stroke="#fff" stroke-width="0.15" text-anchor="middle" >EF4+</text>
<text x="968.4" y="775.8" font-size="10.2" fill="#fff" stroke="#fff" stroke-width="0.15" text-anchor="middle" >EF3</text>
<text x="1010.4" y="775.8" font-size="10.2" fill="#fff" stroke="#fff" stroke-width="0.15" text-anchor="middle" >EF2</text>
<text x="1051.5" y="775.8" font-size="10.2" fill="#fff" stroke="#fff" stroke-width="0.15" text-anchor="middle" >EF1</text>
<text x="1093.7" y="775.8" font-size="10.2" fill="#fff" stroke="#fff" stroke-width="0.15" text-anchor="middle" >EF0</text>
<text x="1135.7" y="775.8" font-size="10.2" fill="#fff" stroke="#fff" stroke-width="0.15" text-anchor="middle" >NONTOR</text>
<rect x="1031" y="612" width="142" height="84" fill="#000" stroke="#fff" stroke-width="2" shape-rendering="crispEdges"/>
<text x="1034.8" y="623.6" font-size="10.1" fill="#fff" stroke="#fff" stroke-width="0.15" >Prob EF2+ Given Supercell</text>
<line x1="1031" y1="625" x2="1173" y2="625" stroke="#fff" stroke-width="2" shape-rendering="crispEdges"/>
<text x="1033.7" y="635.7" font-size="10.2" fill="#fff" stroke="#fff" stroke-width="0.15" >based on CAPE:</text>
<text x="1138" y="635.7" font-size="10.2" fill="#fff" stroke="#fff" stroke-width="0.15" >0.0</text>
<text x="1033.7" y="646.7" font-size="10.2" fill="#fff" stroke="#fff" stroke-width="0.15" >based on LCL:</text>
<text x="1138" y="646.7" font-size="10.2" fill="#fff" stroke="#fff" stroke-width="0.15" >0.0</text>
<text x="1033.7" y="657.7" font-size="10.2" fill="#fff" stroke="#fff" stroke-width="0.15" >based on ESRH:</text>
<text x="1138" y="657.7" font-size="10.2" fill="#fff" stroke="#fff" stroke-width="0.15" >--</text>
<text x="1033.7" y="668.7" font-size="10.2" fill="#fff" stroke="#fff" stroke-width="0.15" >based on EBWD:</text>
<text x="1138" y="668.7" font-size="10.2" fill="#fff" stroke="#fff" stroke-width="0.15" >--</text>
<text x="1033.7" y="679.7" font-size="10.2" fill="#fff" stroke="#fff" stroke-width="0.15" >based on STPC:</text>
<text x="1138" y="679.7" font-size="10.2" fill="#fff" stroke="#fff" stroke-width="0.15" >0.06</text>
<text x="1033.7" y="690.7" font-size="10.2" fill="#fff" stroke="#fff" stroke-width="0.15" >based on STP_fixed:</text>
<text x="1138" y="690.7" font-size="10.2" fill="#fff" stroke="#fff" stroke-width="0.15" >0.05</text>
</svg>
</body></html>
